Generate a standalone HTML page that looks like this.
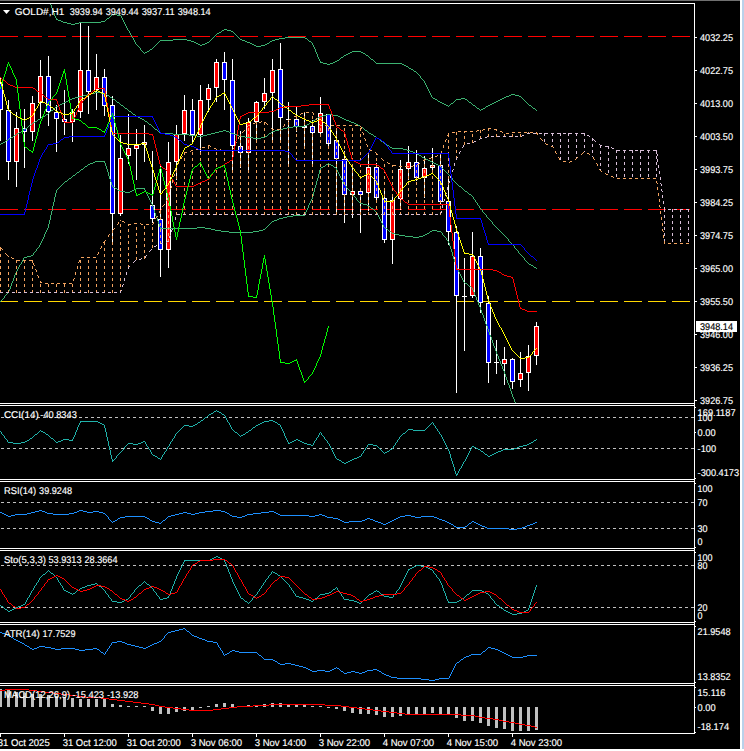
<!DOCTYPE html>
<html><head><meta charset="utf-8"><title>GOLD#,H1</title><style>html,body{margin:0;padding:0;background:#000;overflow:hidden}svg{display:block}</style></head><body>
<svg width="744" height="751" viewBox="0 0 744 751" font-family="&quot;Liberation Sans&quot;, sans-serif" shape-rendering="crispEdges">
<rect width="744" height="751" fill="#000"/>
<rect x="0" y="0" width="744" height="1" fill="#707070"/>
<rect x="740" y="0" width="2" height="751" fill="#ffffff"/>
<rect x="742" y="0" width="2" height="751" fill="#b9d1ea"/>
<rect x="0" y="749" width="744" height="2" fill="#ffffff"/>
<defs>
<clipPath id="cm"><rect x="0" y="4" width="694" height="399"/></clipPath>
<clipPath id="cw"><rect x="0" y="404" width="694" height="330"/></clipPath>
</defs>
<g clip-path="url(#cm)">
<line x1="0" y1="36.5" x2="693" y2="36.5" stroke="#ff0000" stroke-width="1" stroke-dasharray="18 6"/>
<line x1="0" y1="209.5" x2="693" y2="209.5" stroke="#ff0000" stroke-width="1" stroke-dasharray="18 6"/>
<line x1="0" y1="301.5" x2="693" y2="301.5" stroke="#ffd700" stroke-width="1" stroke-dasharray="18 6"/>
<rect x="0" y="78" width="1" height="63" fill="#fff"/>
<rect x="-2" y="83" width="5" height="27" fill="#fff"/>
<rect x="-1" y="84" width="3" height="25" fill="#0000ff"/>
<rect x="8" y="100" width="1" height="80" fill="#fff"/>
<rect x="6" y="110" width="5" height="52" fill="#fff"/>
<rect x="7" y="111" width="3" height="50" fill="#0000ff"/>
<rect x="16" y="112" width="1" height="75" fill="#fff"/>
<rect x="14" y="128" width="5" height="34" fill="#fff"/>
<rect x="15" y="129" width="3" height="32" fill="#ff0000"/>
<rect x="24" y="109" width="1" height="59" fill="#fff"/>
<rect x="22" y="128" width="5" height="4" fill="#fff"/>
<rect x="23" y="129" width="3" height="2" fill="#0000ff"/>
<rect x="32" y="96" width="1" height="45" fill="#fff"/>
<rect x="30" y="103" width="5" height="29" fill="#fff"/>
<rect x="31" y="104" width="3" height="27" fill="#ff0000"/>
<rect x="40" y="60" width="1" height="59" fill="#fff"/>
<rect x="38" y="76" width="5" height="27" fill="#fff"/>
<rect x="39" y="77" width="3" height="25" fill="#ff0000"/>
<rect x="48" y="56" width="1" height="70" fill="#fff"/>
<rect x="46" y="76" width="5" height="36" fill="#fff"/>
<rect x="47" y="77" width="3" height="34" fill="#0000ff"/>
<rect x="56" y="105" width="1" height="47" fill="#fff"/>
<rect x="54" y="112" width="5" height="7" fill="#fff"/>
<rect x="55" y="113" width="3" height="5" fill="#0000ff"/>
<rect x="64" y="90" width="1" height="45" fill="#fff"/>
<rect x="62" y="119" width="5" height="3" fill="#fff"/>
<rect x="63" y="120" width="3" height="1" fill="#0000ff"/>
<rect x="72" y="109" width="1" height="33" fill="#fff"/>
<rect x="70" y="112" width="5" height="10" fill="#fff"/>
<rect x="71" y="113" width="3" height="8" fill="#ff0000"/>
<rect x="80" y="23" width="1" height="95" fill="#fff"/>
<rect x="78" y="70" width="5" height="42" fill="#fff"/>
<rect x="79" y="71" width="3" height="40" fill="#ff0000"/>
<rect x="88" y="26" width="1" height="88" fill="#fff"/>
<rect x="86" y="70" width="5" height="22" fill="#fff"/>
<rect x="87" y="71" width="3" height="20" fill="#0000ff"/>
<rect x="96" y="54" width="1" height="56" fill="#fff"/>
<rect x="94" y="77" width="5" height="13" fill="#fff"/>
<rect x="95" y="78" width="3" height="11" fill="#ff0000"/>
<rect x="104" y="69" width="1" height="47" fill="#fff"/>
<rect x="102" y="77" width="5" height="29" fill="#fff"/>
<rect x="103" y="78" width="3" height="27" fill="#0000ff"/>
<rect x="112" y="96" width="1" height="146" fill="#fff"/>
<rect x="110" y="105" width="5" height="109" fill="#fff"/>
<rect x="111" y="106" width="3" height="107" fill="#0000ff"/>
<rect x="120" y="135" width="1" height="81" fill="#fff"/>
<rect x="118" y="158" width="5" height="56" fill="#fff"/>
<rect x="119" y="159" width="3" height="54" fill="#ff0000"/>
<rect x="128" y="114" width="1" height="50" fill="#fff"/>
<rect x="126" y="148" width="5" height="8" fill="#fff"/>
<rect x="127" y="149" width="3" height="6" fill="#ff0000"/>
<rect x="136" y="129" width="1" height="51" fill="#fff"/>
<rect x="134" y="145" width="5" height="4" fill="#fff"/>
<rect x="135" y="146" width="3" height="2" fill="#ff0000"/>
<rect x="144" y="125" width="1" height="37" fill="#fff"/>
<rect x="142" y="142" width="5" height="3" fill="#fff"/>
<rect x="143" y="143" width="3" height="1" fill="#ff0000"/>
<rect x="152" y="151" width="1" height="72" fill="#fff"/>
<rect x="150" y="205" width="5" height="14" fill="#fff"/>
<rect x="151" y="206" width="3" height="12" fill="#0000ff"/>
<rect x="160" y="166" width="1" height="111" fill="#fff"/>
<rect x="158" y="219" width="5" height="31" fill="#fff"/>
<rect x="159" y="220" width="3" height="29" fill="#0000ff"/>
<rect x="168" y="142" width="1" height="126" fill="#fff"/>
<rect x="166" y="162" width="5" height="88" fill="#fff"/>
<rect x="167" y="163" width="3" height="86" fill="#ff0000"/>
<rect x="176" y="125" width="1" height="55" fill="#fff"/>
<rect x="174" y="134" width="5" height="28" fill="#fff"/>
<rect x="175" y="135" width="3" height="26" fill="#ff0000"/>
<rect x="184" y="95" width="1" height="46" fill="#fff"/>
<rect x="182" y="110" width="5" height="24" fill="#fff"/>
<rect x="183" y="111" width="3" height="22" fill="#ff0000"/>
<rect x="192" y="99" width="1" height="44" fill="#fff"/>
<rect x="190" y="110" width="5" height="25" fill="#fff"/>
<rect x="191" y="111" width="3" height="23" fill="#0000ff"/>
<rect x="200" y="85" width="1" height="69" fill="#fff"/>
<rect x="198" y="100" width="5" height="35" fill="#fff"/>
<rect x="199" y="101" width="3" height="33" fill="#ff0000"/>
<rect x="208" y="84" width="1" height="28" fill="#fff"/>
<rect x="206" y="88" width="5" height="12" fill="#fff"/>
<rect x="207" y="89" width="3" height="10" fill="#ff0000"/>
<rect x="216" y="59" width="1" height="43" fill="#fff"/>
<rect x="214" y="62" width="5" height="26" fill="#fff"/>
<rect x="215" y="63" width="3" height="24" fill="#ff0000"/>
<rect x="224" y="52" width="1" height="58" fill="#fff"/>
<rect x="222" y="62" width="5" height="18" fill="#fff"/>
<rect x="223" y="63" width="3" height="16" fill="#0000ff"/>
<rect x="232" y="59" width="1" height="114" fill="#fff"/>
<rect x="230" y="80" width="5" height="66" fill="#fff"/>
<rect x="231" y="81" width="3" height="64" fill="#0000ff"/>
<rect x="240" y="131" width="1" height="37" fill="#fff"/>
<rect x="238" y="146" width="5" height="7" fill="#fff"/>
<rect x="239" y="147" width="3" height="5" fill="#0000ff"/>
<rect x="248" y="118" width="1" height="52" fill="#fff"/>
<rect x="246" y="122" width="5" height="31" fill="#fff"/>
<rect x="247" y="123" width="3" height="29" fill="#ff0000"/>
<rect x="256" y="101" width="1" height="42" fill="#fff"/>
<rect x="254" y="102" width="5" height="20" fill="#fff"/>
<rect x="255" y="103" width="3" height="18" fill="#ff0000"/>
<rect x="264" y="78" width="1" height="31" fill="#fff"/>
<rect x="262" y="93" width="5" height="9" fill="#fff"/>
<rect x="263" y="94" width="3" height="7" fill="#ff0000"/>
<rect x="272" y="59" width="1" height="84" fill="#fff"/>
<rect x="270" y="70" width="5" height="23" fill="#fff"/>
<rect x="271" y="71" width="3" height="21" fill="#ff0000"/>
<rect x="280" y="43" width="1" height="99" fill="#fff"/>
<rect x="278" y="69" width="5" height="49" fill="#fff"/>
<rect x="279" y="70" width="3" height="47" fill="#0000ff"/>
<rect x="288" y="102" width="1" height="62" fill="#fff"/>
<rect x="286" y="119" width="5" height="1" fill="#fff" />
<rect x="296" y="107" width="1" height="25" fill="#fff"/>
<rect x="294" y="119" width="5" height="8" fill="#fff"/>
<rect x="295" y="120" width="3" height="6" fill="#0000ff"/>
<rect x="304" y="113" width="1" height="35" fill="#fff"/>
<rect x="302" y="126" width="5" height="2" fill="#fff"/>
<rect x="312" y="120" width="1" height="44" fill="#fff"/>
<rect x="310" y="126" width="5" height="7" fill="#fff"/>
<rect x="311" y="127" width="3" height="5" fill="#0000ff"/>
<rect x="320" y="97" width="1" height="37" fill="#fff"/>
<rect x="318" y="113" width="5" height="20" fill="#fff"/>
<rect x="319" y="114" width="3" height="18" fill="#ff0000"/>
<rect x="328" y="114" width="1" height="35" fill="#fff"/>
<rect x="326" y="114" width="5" height="30" fill="#fff"/>
<rect x="327" y="115" width="3" height="28" fill="#0000ff"/>
<rect x="336" y="128" width="1" height="84" fill="#fff"/>
<rect x="334" y="140" width="5" height="19" fill="#fff"/>
<rect x="335" y="141" width="3" height="17" fill="#0000ff"/>
<rect x="344" y="151" width="1" height="72" fill="#fff"/>
<rect x="342" y="159" width="5" height="36" fill="#fff"/>
<rect x="343" y="160" width="3" height="34" fill="#0000ff"/>
<rect x="352" y="168" width="1" height="50" fill="#fff"/>
<rect x="350" y="191" width="5" height="4" fill="#fff"/>
<rect x="351" y="192" width="3" height="2" fill="#ff0000"/>
<rect x="360" y="191" width="1" height="42" fill="#fff"/>
<rect x="358" y="191" width="5" height="4" fill="#fff"/>
<rect x="359" y="192" width="3" height="2" fill="#0000ff"/>
<rect x="368" y="152" width="1" height="59" fill="#fff"/>
<rect x="366" y="167" width="5" height="26" fill="#fff"/>
<rect x="367" y="168" width="3" height="24" fill="#ff0000"/>
<rect x="376" y="163" width="1" height="40" fill="#fff"/>
<rect x="374" y="167" width="5" height="31" fill="#fff"/>
<rect x="375" y="168" width="3" height="29" fill="#0000ff"/>
<rect x="384" y="190" width="1" height="53" fill="#fff"/>
<rect x="382" y="198" width="5" height="42" fill="#fff"/>
<rect x="383" y="199" width="3" height="40" fill="#0000ff"/>
<rect x="392" y="195" width="1" height="69" fill="#fff"/>
<rect x="390" y="200" width="5" height="40" fill="#fff"/>
<rect x="391" y="201" width="3" height="38" fill="#ff0000"/>
<rect x="400" y="160" width="1" height="50" fill="#fff"/>
<rect x="398" y="169" width="5" height="30" fill="#fff"/>
<rect x="399" y="170" width="3" height="28" fill="#ff0000"/>
<rect x="408" y="146" width="1" height="34" fill="#fff"/>
<rect x="406" y="162" width="5" height="7" fill="#fff"/>
<rect x="407" y="163" width="3" height="5" fill="#ff0000"/>
<rect x="416" y="150" width="1" height="31" fill="#fff"/>
<rect x="414" y="162" width="5" height="16" fill="#fff"/>
<rect x="415" y="163" width="3" height="14" fill="#0000ff"/>
<rect x="424" y="156" width="1" height="42" fill="#fff"/>
<rect x="422" y="168" width="5" height="10" fill="#fff"/>
<rect x="423" y="169" width="3" height="8" fill="#ff0000"/>
<rect x="432" y="148" width="1" height="24" fill="#fff"/>
<rect x="430" y="165" width="5" height="3" fill="#fff"/>
<rect x="431" y="166" width="3" height="1" fill="#ff0000"/>
<rect x="440" y="154" width="1" height="51" fill="#fff"/>
<rect x="438" y="165" width="5" height="37" fill="#fff"/>
<rect x="439" y="166" width="3" height="35" fill="#0000ff"/>
<rect x="448" y="178" width="1" height="67" fill="#fff"/>
<rect x="446" y="201" width="5" height="31" fill="#fff"/>
<rect x="447" y="202" width="3" height="29" fill="#0000ff"/>
<rect x="456" y="226" width="1" height="167" fill="#fff"/>
<rect x="454" y="232" width="5" height="64" fill="#fff"/>
<rect x="455" y="233" width="3" height="62" fill="#0000ff"/>
<rect x="464" y="258" width="1" height="93" fill="#fff"/>
<rect x="462" y="296" width="5" height="1" fill="#fff" />
<rect x="472" y="232" width="1" height="66" fill="#fff"/>
<rect x="470" y="256" width="5" height="40" fill="#fff"/>
<rect x="471" y="257" width="3" height="38" fill="#ff0000"/>
<rect x="480" y="248" width="1" height="65" fill="#fff"/>
<rect x="478" y="256" width="5" height="47" fill="#fff"/>
<rect x="479" y="257" width="3" height="45" fill="#0000ff"/>
<rect x="488" y="296" width="1" height="87" fill="#fff"/>
<rect x="486" y="303" width="5" height="60" fill="#fff"/>
<rect x="487" y="304" width="3" height="58" fill="#0000ff"/>
<rect x="496" y="340" width="1" height="34" fill="#fff"/>
<rect x="494" y="362" width="5" height="1" fill="#fff" />
<rect x="504" y="347" width="1" height="38" fill="#fff"/>
<rect x="502" y="359" width="5" height="5" fill="#fff"/>
<rect x="503" y="360" width="3" height="3" fill="#ff0000"/>
<rect x="512" y="358" width="1" height="31" fill="#fff"/>
<rect x="510" y="359" width="5" height="23" fill="#fff"/>
<rect x="511" y="360" width="3" height="21" fill="#0000ff"/>
<rect x="520" y="352" width="1" height="35" fill="#fff"/>
<rect x="518" y="373" width="5" height="7" fill="#fff"/>
<rect x="519" y="374" width="3" height="5" fill="#ff0000"/>
<rect x="528" y="345" width="1" height="46" fill="#fff"/>
<rect x="526" y="356" width="5" height="17" fill="#fff"/>
<rect x="527" y="357" width="3" height="15" fill="#ff0000"/>
<rect x="536" y="322" width="1" height="43" fill="#fff"/>
<rect x="534" y="326" width="5" height="30" fill="#fff"/>
<rect x="535" y="327" width="3" height="28" fill="#ff0000"/>
<path d="M50.5 2v3M51.5 5v3M53.5 10v3M54.5 13v3M315.5 49v3M317.5 54v3M48 -2.5h1M48 -1.5h1M49 0.5h1M49 1.5h1M52 8.5h1M52 9.5h1M112 14.5h5M111 15.5h1M117 15.5h4M55 16.5h1M110 16.5h1M121 16.5h1M55 17.5h1M109 17.5h1M121 17.5h1M56 18.5h1M107 18.5h2M122 18.5h1M56 19.5h2M106 19.5h1M122 19.5h1M58 20.5h3M105 20.5h1M123 20.5h1M61 21.5h2M101 21.5h4M123 21.5h1M63 22.5h4M79 22.5h22M124 22.5h1M67 23.5h4M75 23.5h4M124 23.5h1M71 24.5h4M125 24.5h1M125 25.5h1M126 26.5h1M126 27.5h1M127 28.5h1M127 29.5h1M224 29.5h3M128 30.5h1M222 30.5h2M227 30.5h4M129 31.5h1M221 31.5h1M231 31.5h2M129 32.5h1M219 32.5h2M233 32.5h1M130 33.5h1M217 33.5h2M234 33.5h1M130 34.5h1M216 34.5h1M235 34.5h1M131 35.5h1M215 35.5h1M236 35.5h1M131 36.5h1M214 36.5h1M237 36.5h1M132 37.5h1M213 37.5h1M238 37.5h1M285 37.5h20M133 38.5h1M212 38.5h1M239 38.5h1M279 38.5h6M305 38.5h2M133 39.5h1M173 39.5h14M211 39.5h1M240 39.5h2M275 39.5h4M307 39.5h1M134 40.5h1M160 40.5h13M187 40.5h4M210 40.5h1M242 40.5h3M272 40.5h3M308 40.5h1M134 41.5h1M159 41.5h1M191 41.5h3M209 41.5h1M245 41.5h2M270 41.5h2M309 41.5h2M135 42.5h1M158 42.5h1M194 42.5h2M207 42.5h2M247 42.5h3M269 42.5h1M311 42.5h1M135 43.5h1M157 43.5h1M196 43.5h2M205 43.5h2M250 43.5h2M267 43.5h2M312 43.5h1M136 44.5h1M156 44.5h1M198 44.5h2M202 44.5h3M252 44.5h2M265 44.5h2M312 44.5h1M137 45.5h1M155 45.5h1M200 45.5h2M254 45.5h2M261 45.5h4M313 45.5h1M138 46.5h1M154 46.5h1M256 46.5h5M313 46.5h1M139 47.5h1M153 47.5h1M314 47.5h1M140 48.5h1M152 48.5h1M314 48.5h1M140 49.5h1M150 49.5h2M141 50.5h1M149 50.5h1M142 51.5h1M147 51.5h2M352 51.5h9M143 52.5h1M145 52.5h2M316 52.5h1M350 52.5h2M361 52.5h2M144 53.5h1M316 53.5h1M348 53.5h2M363 53.5h2M346 54.5h2M365 54.5h1M344 55.5h2M366 55.5h2M343 56.5h1M368 56.5h1M318 57.5h1M341 57.5h2M369 57.5h1M318 58.5h1M340 58.5h1M370 58.5h1M319 59.5h1M339 59.5h1M371 59.5h2M319 60.5h1M337 60.5h2M373 60.5h1M320 61.5h1M335 61.5h2M374 61.5h1M320 62.5h3M333 62.5h2M375 62.5h1M323 63.5h4M330 63.5h3M376 63.5h26M327 64.5h3M402 64.5h2M404 65.5h2M406 66.5h2M408 67.5h1M409 68.5h2M411 69.5h2M413 70.5h1M414 71.5h2M416 72.5h1M417 73.5h1M418 74.5h1M419 75.5h1M420 76.5h1M420 77.5h1M421 78.5h1M422 79.5h1M423 80.5h1M424 81.5h1M424 82.5h1M425 83.5h1M425 84.5h1M426 85.5h1M426 86.5h1M427 87.5h1M427 88.5h1M428 89.5h1M428 90.5h1M429 91.5h1M429 92.5h1M430 93.5h1M430 94.5h1M511 94.5h4M431 95.5h1M509 95.5h2M515 95.5h4M431 96.5h1M506 96.5h3M519 96.5h2M432 97.5h1M504 97.5h2M521 97.5h1M433 98.5h2M461 98.5h4M502 98.5h2M522 98.5h1M435 99.5h2M456 99.5h5M465 99.5h2M500 99.5h2M523 99.5h1M437 100.5h1M455 100.5h1M467 100.5h1M498 100.5h2M524 100.5h1M438 101.5h2M454 101.5h1M468 101.5h1M496 101.5h2M525 101.5h1M440 102.5h2M453 102.5h1M469 102.5h2M494 102.5h2M526 102.5h1M442 103.5h2M451 103.5h2M471 103.5h1M492 103.5h2M527 103.5h1M444 104.5h2M450 104.5h1M472 104.5h1M490 104.5h2M528 104.5h1M446 105.5h2M449 105.5h1M473 105.5h2M488 105.5h2M529 105.5h2M448 106.5h1M475 106.5h1M486 106.5h2M531 106.5h1M476 107.5h1M485 107.5h1M532 107.5h1M477 108.5h2M483 108.5h2M533 108.5h2M479 109.5h1M481 109.5h2M535 109.5h1M480 110.5h1M536 110.5h1" fill="none" stroke="#3cb371" stroke-width="1"/>
<path d="M95 92.5h6M91 93.5h4M101 93.5h4M87 94.5h4M105 94.5h2M83 95.5h4M107 95.5h2M79 96.5h4M109 96.5h1M75 97.5h4M110 97.5h2M72 98.5h3M112 98.5h1M70 99.5h2M113 99.5h2M68 100.5h2M115 100.5h1M66 101.5h2M116 101.5h1M64 102.5h2M117 102.5h2M62 103.5h2M119 103.5h1M60 104.5h2M120 104.5h1M58 105.5h2M121 105.5h2M56 106.5h2M123 106.5h1M55 107.5h1M124 107.5h1M54 108.5h1M125 108.5h2M53 109.5h1M127 109.5h1M51 110.5h2M128 110.5h1M50 111.5h1M129 111.5h2M49 112.5h1M131 112.5h1M48 113.5h1M132 113.5h1M46 114.5h2M133 114.5h2M327 114.5h6M45 115.5h1M135 115.5h1M323 115.5h4M333 115.5h5M43 116.5h2M136 116.5h2M320 116.5h3M338 116.5h2M41 117.5h2M138 117.5h2M318 117.5h2M340 117.5h2M40 118.5h1M140 118.5h2M317 118.5h1M342 118.5h2M38 119.5h2M142 119.5h2M315 119.5h2M344 119.5h2M37 120.5h1M144 120.5h1M313 120.5h2M346 120.5h3M35 121.5h2M145 121.5h2M312 121.5h1M349 121.5h2M33 122.5h2M147 122.5h1M310 122.5h2M351 122.5h3M32 123.5h1M148 123.5h1M309 123.5h1M354 123.5h2M31 124.5h1M149 124.5h2M307 124.5h2M356 124.5h2M29 125.5h2M151 125.5h1M305 125.5h2M358 125.5h2M28 126.5h1M152 126.5h1M293 126.5h12M360 126.5h1M27 127.5h1M153 127.5h1M287 127.5h6M361 127.5h2M25 128.5h2M154 128.5h1M283 128.5h4M363 128.5h1M24 129.5h1M155 129.5h2M279 129.5h4M364 129.5h1M22 130.5h2M157 130.5h1M223 130.5h3M275 130.5h4M365 130.5h2M21 131.5h1M158 131.5h1M219 131.5h4M226 131.5h3M272 131.5h3M367 131.5h1M19 132.5h2M159 132.5h1M215 132.5h4M229 132.5h2M271 132.5h1M368 132.5h1M17 133.5h2M160 133.5h13M211 133.5h4M231 133.5h3M269 133.5h2M369 133.5h2M16 134.5h1M173 134.5h16M207 134.5h4M234 134.5h3M268 134.5h1M371 134.5h2M14 135.5h2M189 135.5h8M203 135.5h4M237 135.5h2M267 135.5h1M373 135.5h1M13 136.5h1M197 136.5h6M239 136.5h6M265 136.5h2M374 136.5h2M11 137.5h2M245 137.5h8M261 137.5h4M376 137.5h1M9 138.5h2M253 138.5h8M377 138.5h2M8 139.5h1M379 139.5h1M6 140.5h2M380 140.5h1M5 141.5h1M381 141.5h2M3 142.5h2M383 142.5h1M1 143.5h2M384 143.5h1M0 144.5h1M385 144.5h2M-2 145.5h2M387 145.5h2M389 146.5h1M390 147.5h2M392 148.5h11M403 149.5h4M407 150.5h3M410 151.5h3M413 152.5h2M415 153.5h2M417 154.5h2M419 155.5h2M421 156.5h1M422 157.5h2M424 158.5h2M426 159.5h2M428 160.5h2M430 161.5h2M432 162.5h2M434 163.5h2M436 164.5h2M438 165.5h2M440 166.5h1M441 167.5h1M442 168.5h1M443 169.5h1M444 170.5h1M445 171.5h1M446 172.5h1M447 173.5h1M448 174.5h1M449 175.5h1M450 176.5h1M451 177.5h1M452 178.5h1M452 179.5h1M453 180.5h1M454 181.5h1M455 182.5h1M456 183.5h1M457 184.5h1M458 185.5h1M459 186.5h2M461 187.5h1M462 188.5h1M463 189.5h1M464 190.5h1M465 191.5h2M467 192.5h1M468 193.5h1M469 194.5h2M471 195.5h1M472 196.5h1M473 197.5h1M473 198.5h1M474 199.5h1M475 200.5h1M475 201.5h1M476 202.5h1M477 203.5h1M477 204.5h1M478 205.5h1M479 206.5h1M479 207.5h1M480 208.5h1M481 209.5h1M482 210.5h1M482 211.5h1M483 212.5h1M484 213.5h1M485 214.5h1M486 215.5h1M486 216.5h1M487 217.5h1M488 218.5h1M489 219.5h1M490 220.5h1M491 221.5h1M492 222.5h1M492 223.5h1M493 224.5h1M494 225.5h1M495 226.5h1M496 227.5h1M497 228.5h1M498 229.5h1M499 230.5h1M500 231.5h1M501 232.5h1M502 233.5h1M503 234.5h1M504 235.5h1M505 236.5h1M506 237.5h1M507 238.5h1M508 239.5h1M508 240.5h1M509 241.5h1M510 242.5h1M511 243.5h1M512 244.5h1M513 245.5h1M514 246.5h1M514 247.5h1M515 248.5h1M516 249.5h1M517 250.5h1M518 251.5h1M518 252.5h1M519 253.5h1M520 254.5h1M521 255.5h1M522 256.5h1M523 257.5h1M524 258.5h1M524 259.5h1M525 260.5h1M526 261.5h1M527 262.5h1M528 263.5h1M529 264.5h2M531 265.5h2M533 266.5h1M534 267.5h2M536 268.5h1" fill="none" stroke="#3cb371" stroke-width="1"/>
<path d="M10.5 286v3M11.5 283v3M13.5 278v3M14.5 275v3M44.5 234v3M48.5 224v4M49.5 220v4M50.5 215v5M51.5 211v4M52.5 206v5M53.5 202v4M54.5 197v5M55.5 193v4M56.5 190v3M105.5 163v3M106.5 166v3M107.5 169v3M108.5 172v4M109.5 176v3M110.5 179v3M111.5 182v3M152.5 204v3M153.5 207v3M154.5 210v3M155.5 213v3M157.5 218v3M158.5 221v3M159.5 224v3M308.5 205v3M312.5 196v3M313.5 192v4M314.5 188v4M315.5 185v3M316.5 181v4M317.5 178v3M318.5 174v4M319.5 170v4M449.5 243v3M450.5 246v3M451.5 249v3M452.5 252v4M453.5 256v3M454.5 259v3M455.5 262v3M456.5 265v3M474.5 292v3M476.5 297v3M478.5 302v3M480.5 307v3M481.5 310v3M483.5 315v3M484.5 318v3M485.5 321v3M487.5 326v3M488.5 329v3M489.5 332v3M491.5 337v3M492.5 340v3M493.5 343v3M495.5 348v3M496.5 351v3M498.5 356v3M500.5 361v3M502.5 366v3M504.5 371v3M505.5 374v3M506.5 377v3M507.5 380v3M509.5 385v3M510.5 388v3M511.5 391v3M512.5 394v3M514.5 399v3M516.5 404v3M518.5 409v3M95 161.5h10M93 162.5h2M104 162.5h1M90 163.5h3M328 163.5h1M88 164.5h2M326 164.5h2M329 164.5h2M87 165.5h1M325 165.5h1M331 165.5h2M85 166.5h2M323 166.5h2M333 166.5h1M84 167.5h1M321 167.5h2M334 167.5h2M83 168.5h1M320 168.5h1M336 168.5h1M81 169.5h2M320 169.5h1M336 169.5h1M80 170.5h1M337 170.5h1M79 171.5h1M337 171.5h1M77 172.5h2M338 172.5h1M76 173.5h1M338 173.5h1M75 174.5h1M339 174.5h1M73 175.5h2M339 175.5h1M72 176.5h1M340 176.5h1M71 177.5h1M340 177.5h1M69 178.5h2M341 178.5h1M68 179.5h1M341 179.5h1M67 180.5h1M342 180.5h1M65 181.5h2M342 181.5h1M64 182.5h1M343 182.5h1M63 183.5h1M343 183.5h1M62 184.5h1M344 184.5h1M61 185.5h1M112 185.5h1M345 185.5h1M60 186.5h1M112 186.5h1M346 186.5h1M59 187.5h1M113 187.5h2M346 187.5h1M58 188.5h1M115 188.5h2M136 188.5h9M347 188.5h1M57 189.5h1M117 189.5h1M134 189.5h2M144 189.5h1M348 189.5h1M118 190.5h2M132 190.5h2M145 190.5h1M349 190.5h1M120 191.5h5M130 191.5h2M145 191.5h1M350 191.5h1M125 192.5h5M146 192.5h1M350 192.5h1M146 193.5h1M351 193.5h1M147 194.5h1M352 194.5h1M147 195.5h1M353 195.5h1M148 196.5h1M354 196.5h1M148 197.5h1M355 197.5h1M149 198.5h1M356 198.5h1M149 199.5h1M311 199.5h1M356 199.5h1M150 200.5h1M311 200.5h1M357 200.5h1M150 201.5h1M310 201.5h1M358 201.5h1M151 202.5h1M310 202.5h1M359 202.5h1M151 203.5h1M309 203.5h1M360 203.5h3M309 204.5h1M363 204.5h4M367 205.5h2M369 206.5h1M370 207.5h1M307 208.5h1M371 208.5h2M307 209.5h1M373 209.5h1M306 210.5h1M374 210.5h1M306 211.5h1M375 211.5h1M305 212.5h1M376 212.5h1M305 213.5h1M377 213.5h1M304 214.5h1M377 214.5h1M293 215.5h12M378 215.5h1M156 216.5h1M287 216.5h6M378 216.5h1M156 217.5h1M283 217.5h4M379 217.5h1M279 218.5h4M379 218.5h1M277 219.5h2M380 219.5h1M274 220.5h3M380 220.5h1M272 221.5h2M381 221.5h1M271 222.5h1M381 222.5h1M270 223.5h1M382 223.5h1M269 224.5h1M382 224.5h1M268 225.5h1M383 225.5h1M267 226.5h1M383 226.5h1M160 227.5h1M197 227.5h8M266 227.5h1M384 227.5h1M47 228.5h1M160 228.5h37M205 228.5h6M265 228.5h1M385 228.5h2M47 229.5h1M211 229.5h4M263 229.5h2M387 229.5h1M46 230.5h1M215 230.5h6M259 230.5h4M388 230.5h1M432 230.5h5M46 231.5h1M221 231.5h8M253 231.5h6M389 231.5h2M430 231.5h2M437 231.5h4M45 232.5h1M229 232.5h24M391 232.5h1M429 232.5h1M441 232.5h1M45 233.5h1M392 233.5h3M427 233.5h2M442 233.5h1M395 234.5h4M425 234.5h2M442 234.5h1M399 235.5h6M423 235.5h2M443 235.5h1M405 236.5h8M419 236.5h4M444 236.5h1M43 237.5h1M413 237.5h6M445 237.5h1M43 238.5h1M446 238.5h1M42 239.5h1M446 239.5h1M42 240.5h1M447 240.5h1M41 241.5h1M448 241.5h1M41 242.5h1M448 242.5h1M40 243.5h1M40 244.5h1M39 245.5h1M39 246.5h1M38 247.5h1M37 248.5h1M36 249.5h1M36 250.5h1M35 251.5h1M34 252.5h1M33 253.5h1M33 254.5h1M31 255.5h2M27 256.5h4M24 257.5h3M23 258.5h1M23 259.5h1M22 260.5h1M22 261.5h1M21 262.5h1M21 263.5h1M20 264.5h1M19 265.5h1M19 266.5h1M18 267.5h1M18 268.5h1M457 268.5h1M17 269.5h1M457 269.5h1M17 270.5h1M458 270.5h1M16 271.5h1M458 271.5h1M16 272.5h1M459 272.5h1M15 273.5h1M459 273.5h1M15 274.5h1M460 274.5h1M460 275.5h1M461 276.5h1M461 277.5h1M462 278.5h1M462 279.5h1M463 280.5h1M12 281.5h1M463 281.5h1M12 282.5h1M464 282.5h1M465 283.5h2M467 284.5h1M468 285.5h1M469 286.5h2M471 287.5h1M472 288.5h1M9 289.5h1M472 289.5h1M9 290.5h1M473 290.5h1M8 291.5h1M473 291.5h1M8 292.5h1M7 293.5h1M6 294.5h1M5 295.5h1M475 295.5h1M4 296.5h1M475 296.5h1M4 297.5h1M3 298.5h1M2 299.5h1M1 300.5h1M477 300.5h1M0 301.5h1M477 301.5h1M-1 302.5h1M-2 303.5h1M479 305.5h1M479 306.5h1M482 313.5h1M482 314.5h1M486 324.5h1M486 325.5h1M490 335.5h1M490 336.5h1M494 346.5h1M494 347.5h1M497 354.5h1M497 355.5h1M499 359.5h1M499 360.5h1M501 364.5h1M501 365.5h1M503 369.5h1M503 370.5h1M508 383.5h1M508 384.5h1M513 397.5h1M513 398.5h1M515 402.5h1M515 403.5h1M517 407.5h1M517 408.5h1M519 412.5h1M519 413.5h1M520 414.5h1M520 415.5h1" fill="none" stroke="#3cb371" stroke-width="1"/>
<path d="M0.5 248v3M0.5 254v3M0.5 260v3M0.5 266v3M0.5 272v3M0.5 278v3M0.5 284v3M0.5 290v3M8.5 260v3M8.5 266v3M8.5 272v3M8.5 278v3M8.5 284v3M8.5 290v3M16.5 260v3M16.5 266v3M16.5 272v3M16.5 278v3M16.5 284v3M16.5 290v3M24.5 260v3M24.5 266v3M24.5 272v3M24.5 278v3M24.5 284v3M24.5 290v3M32.5 260v3M32.5 266v3M32.5 272v3M32.5 278v3M32.5 284v3M32.5 290v3M40.5 284v3M40.5 290v3M48.5 284v3M48.5 290v3M56.5 284v3M56.5 290v3M64.5 284v3M64.5 290v3M72.5 284v3M72.5 290v3M80.5 260v3M80.5 266v3M80.5 272v3M80.5 278v3M80.5 284v3M80.5 290v3M88.5 260v3M88.5 266v3M88.5 272v3M88.5 278v3M88.5 284v3M88.5 290v3M96.5 260v3M96.5 266v3M96.5 272v3M96.5 278v3M96.5 284v3M96.5 290v3M104.5 242v3M104.5 248v3M104.5 254v3M104.5 260v3M104.5 266v3M104.5 272v3M104.5 278v3M104.5 284v3M104.5 290v3M112.5 230v3M112.5 236v3M112.5 242v3M112.5 248v3M112.5 254v3M112.5 260v3M112.5 266v3M112.5 272v3M112.5 278v3M112.5 284v3M112.5 290v3M120.5 224v3M120.5 230v3M120.5 236v3M120.5 242v3M120.5 248v3M120.5 254v3M120.5 260v3M120.5 266v3M120.5 272v3M120.5 278v3M120.5 284v3M120.5 290v3M128.5 229v3M128.5 235v3M128.5 241v3M128.5 247v3M128.5 253v3M128.5 259v3M128.5 265v3M136.5 227v3M136.5 233v3M136.5 239v3M136.5 245v3M136.5 251v3M136.5 257v3M144.5 226v3M144.5 232v3M144.5 238v3M144.5 244v3M144.5 250v3M144.5 256v3M152.5 227v3M152.5 233v3M152.5 239v3M152.5 245v3M160.5 211v3M160.5 217v3M160.5 223v3M160.5 229v3M160.5 235v3M160.5 241v3M168.5 197v3M168.5 203v3M168.5 209v3M168.5 215v3M168.5 221v3M168.5 227v3M168.5 233v3M168.5 239v3M176.5 170v3M176.5 176v3M176.5 182v3M176.5 188v3M176.5 194v3M176.5 200v3M176.5 206v3M176.5 212v3M184.5 152v3M184.5 158v3M184.5 164v3M184.5 170v3M184.5 176v3M184.5 182v3M184.5 188v3M184.5 194v3M184.5 200v3M184.5 206v3M184.5 212v3M192.5 152v3M192.5 158v3M192.5 164v3M192.5 170v3M192.5 176v3M192.5 182v3M192.5 188v3M192.5 194v3M192.5 200v3M192.5 206v3M192.5 212v3M200.5 152v3M200.5 158v3M200.5 164v3M200.5 170v3M200.5 176v3M200.5 182v3M200.5 188v3M200.5 194v3M200.5 200v3M200.5 206v3M200.5 212v3M208.5 146v3M208.5 152v3M208.5 158v3M208.5 164v3M208.5 170v3M208.5 176v3M208.5 182v3M208.5 188v3M208.5 194v3M208.5 200v3M208.5 206v3M208.5 212v3M216.5 152v3M216.5 158v3M216.5 164v3M216.5 170v3M216.5 176v3M216.5 182v3M216.5 188v3M216.5 194v3M216.5 200v3M216.5 206v3M216.5 212v3M224.5 152v3M224.5 158v3M224.5 164v3M224.5 170v3M224.5 176v3M224.5 182v3M224.5 188v3M224.5 194v3M224.5 200v3M224.5 206v3M224.5 212v3M232.5 152v3M232.5 158v3M232.5 164v3M232.5 170v3M232.5 176v3M232.5 182v3M232.5 188v3M232.5 194v3M232.5 200v3M232.5 206v3M232.5 212v3M240.5 134v3M240.5 140v3M240.5 146v3M240.5 152v3M240.5 158v3M240.5 164v3M240.5 170v3M240.5 176v3M240.5 182v3M240.5 188v3M240.5 194v3M240.5 200v3M240.5 206v3M240.5 212v3M248.5 128v3M248.5 134v3M248.5 140v3M248.5 146v3M248.5 152v3M248.5 158v3M248.5 164v3M248.5 170v3M248.5 176v3M248.5 182v3M248.5 188v3M248.5 194v3M248.5 200v3M248.5 206v3M248.5 212v3M256.5 122v3M256.5 128v3M256.5 134v3M256.5 140v3M256.5 146v3M256.5 152v3M256.5 158v3M256.5 164v3M256.5 170v3M256.5 176v3M256.5 182v3M256.5 188v3M256.5 194v3M256.5 200v3M256.5 206v3M256.5 212v3M264.5 122v3M264.5 128v3M264.5 134v3M264.5 140v3M264.5 146v3M264.5 152v3M264.5 158v3M264.5 164v3M264.5 170v3M264.5 176v3M264.5 182v3M264.5 188v3M264.5 194v3M264.5 200v3M264.5 206v3M264.5 212v3M272.5 134v3M272.5 140v3M272.5 146v3M272.5 152v3M272.5 158v3M272.5 164v3M272.5 170v3M272.5 176v3M272.5 182v3M272.5 188v3M272.5 194v3M272.5 200v3M272.5 206v3M272.5 212v3M280.5 134v3M280.5 140v3M280.5 146v3M280.5 152v3M280.5 158v3M280.5 164v3M280.5 170v3M280.5 176v3M280.5 182v3M280.5 188v3M280.5 194v3M280.5 200v3M280.5 206v3M280.5 212v3M288.5 122v3M288.5 128v3M288.5 134v3M288.5 140v3M288.5 146v3M288.5 152v3M288.5 158v3M288.5 164v3M288.5 170v3M288.5 176v3M288.5 182v3M288.5 188v3M288.5 194v3M288.5 200v3M288.5 206v3M288.5 212v3M296.5 116v3M296.5 122v3M296.5 128v3M296.5 134v3M296.5 140v3M296.5 146v3M296.5 152v3M296.5 158v3M296.5 164v3M296.5 170v3M296.5 176v3M296.5 182v3M296.5 188v3M296.5 194v3M296.5 200v3M296.5 206v3M296.5 212v3M304.5 116v3M304.5 122v3M304.5 128v3M304.5 134v3M304.5 140v3M304.5 146v3M304.5 152v3M304.5 158v3M304.5 164v3M304.5 170v3M304.5 176v3M304.5 182v3M304.5 188v3M304.5 194v3M304.5 200v3M304.5 206v3M304.5 212v3M312.5 116v3M312.5 122v3M312.5 128v3M312.5 134v3M312.5 140v3M312.5 146v3M312.5 152v3M312.5 158v3M312.5 164v3M312.5 170v3M312.5 176v3M312.5 182v3M312.5 188v3M312.5 194v3M312.5 200v3M312.5 206v3M312.5 212v3M320.5 128v3M320.5 134v3M320.5 140v3M320.5 146v3M320.5 152v3M320.5 158v3M320.5 164v3M320.5 170v3M320.5 176v3M320.5 182v3M320.5 188v3M320.5 194v3M320.5 200v3M320.5 206v3M320.5 212v3M328.5 128v3M328.5 134v3M328.5 140v3M328.5 146v3M328.5 152v3M328.5 158v3M328.5 164v3M328.5 170v3M328.5 176v3M328.5 182v3M328.5 188v3M328.5 194v3M328.5 200v3M328.5 206v3M328.5 212v3M336.5 128v3M336.5 134v3M336.5 140v3M336.5 146v3M336.5 152v3M336.5 158v3M336.5 164v3M336.5 170v3M336.5 176v3M336.5 182v3M336.5 188v3M336.5 194v3M336.5 200v3M336.5 206v3M336.5 212v3M344.5 128v3M344.5 134v3M344.5 140v3M344.5 146v3M344.5 152v3M344.5 158v3M344.5 164v3M344.5 170v3M344.5 176v3M344.5 182v3M344.5 188v3M344.5 194v3M344.5 200v3M344.5 206v3M344.5 212v3M352.5 128v3M352.5 134v3M352.5 140v3M352.5 146v3M352.5 152v3M352.5 158v3M352.5 164v3M352.5 170v3M352.5 176v3M352.5 182v3M352.5 188v3M352.5 194v3M352.5 200v3M352.5 206v3M352.5 212v3M360.5 128v3M360.5 134v3M360.5 140v3M360.5 146v3M360.5 152v3M360.5 158v3M360.5 164v3M360.5 170v3M360.5 176v3M360.5 182v3M360.5 188v3M360.5 194v3M360.5 200v3M360.5 206v3M360.5 212v3M368.5 152v3M368.5 158v3M368.5 164v3M368.5 170v3M368.5 176v3M368.5 182v3M368.5 188v3M368.5 194v3M368.5 200v3M368.5 206v3M368.5 212v3M376.5 158v3M376.5 164v3M376.5 170v3M376.5 176v3M376.5 182v3M376.5 188v3M376.5 194v3M376.5 200v3M376.5 206v3M376.5 212v3M384.5 164v3M384.5 170v3M384.5 176v3M384.5 182v3M384.5 188v3M384.5 194v3M384.5 200v3M384.5 206v3M384.5 212v3M392.5 170v3M392.5 176v3M392.5 182v3M392.5 188v3M392.5 194v3M392.5 200v3M392.5 206v3M392.5 212v3M400.5 170v3M400.5 176v3M400.5 182v3M400.5 188v3M400.5 194v3M400.5 200v3M400.5 206v3M400.5 212v3M408.5 170v3M408.5 176v3M408.5 182v3M408.5 188v3M408.5 194v3M408.5 200v3M408.5 206v3M408.5 212v3M416.5 170v3M416.5 176v3M416.5 182v3M416.5 188v3M416.5 194v3M416.5 200v3M416.5 206v3M416.5 212v3M424.5 164v3M424.5 170v3M424.5 176v3M424.5 182v3M424.5 188v3M424.5 194v3M424.5 200v3M424.5 206v3M424.5 212v3M432.5 158v3M432.5 164v3M432.5 170v3M432.5 176v3M432.5 182v3M432.5 188v3M432.5 194v3M432.5 200v3M432.5 206v3M432.5 212v3M440.5 158v3M440.5 164v3M440.5 170v3M440.5 176v3M440.5 182v3M440.5 188v3M440.5 194v3M440.5 200v3M440.5 206v3M440.5 212v3M448.5 134v3M448.5 140v3M448.5 146v3M448.5 152v3M448.5 158v3M448.5 164v3M448.5 170v3M448.5 176v3M448.5 182v3M456.5 132v3M456.5 138v3M456.5 144v3M456.5 150v3M456.5 156v3M464.5 136v3M464.5 142v3M472.5 134v3M472.5 140v3M480.5 130v3M480.5 136v3M488.5 128v3M488.5 134v3M496.5 134v3M504.5 134v3M512.5 134v3M520.5 134v3M304 112.5h1M312 112.5h1M272 129.5h1M280 129.5h1M496 129.5h1M272 130.5h1M280 130.5h1M496 130.5h1M464 131.5h1M464 132.5h1M528 132.5h1M536 132.5h1M528 133.5h1M536 133.5h1M200 148.5h1M376 153.5h1M376 154.5h1M440 154.5h1M424 159.5h1M424 160.5h1M392 165.5h1M416 165.5h1M176 166.5h1M392 166.5h1M400 166.5h1M408 166.5h1M416 166.5h1M120 220.5h1M136 223.5h1M128 224.5h1M128 225.5h1M8 256.5h1" fill="none" stroke="#f4a460" stroke-width="1"/>
<path d="M544.5 133v3M544.5 139v3M552.5 133v3M552.5 139v3M560.5 133v3M560.5 139v3M560.5 145v3M560.5 151v3M560.5 157v3M568.5 133v3M568.5 139v3M568.5 145v3M568.5 151v3M568.5 157v3M576.5 133v3M576.5 139v3M576.5 145v3M576.5 151v3M584.5 133v3M584.5 139v3M584.5 145v3M592.5 138v3M592.5 144v3M592.5 150v3M600.5 145v3M600.5 151v3M600.5 157v3M600.5 163v3M608.5 146v3M608.5 152v3M608.5 158v3M608.5 164v3M608.5 170v3M616.5 150v3M616.5 156v3M616.5 162v3M616.5 168v3M616.5 174v3M624.5 150v3M624.5 156v3M624.5 162v3M624.5 168v3M624.5 174v3M632.5 150v3M632.5 156v3M632.5 162v3M632.5 168v3M632.5 174v3M640.5 150v3M640.5 156v3M640.5 162v3M640.5 168v3M640.5 174v3M648.5 150v3M648.5 156v3M648.5 162v3M648.5 168v3M648.5 174v3M656.5 150v3M656.5 156v3M656.5 162v3M656.5 168v3M656.5 174v3M664.5 209v3M664.5 215v3M664.5 221v3M664.5 227v3M664.5 233v3M664.5 239v3M672.5 209v3M672.5 215v3M672.5 221v3M672.5 227v3M672.5 233v3M672.5 239v3M680.5 209v3M680.5 215v3M680.5 221v3M680.5 227v3M680.5 233v3M680.5 239v3M688.5 209v3M688.5 215v3M688.5 221v3M688.5 227v3M688.5 233v3M688.5 239v3M552 145.5h1M552 146.5h1M584 151.5h1M592 156.5h1M576 157.5h1M576 158.5h1M600 169.5h1M600 170.5h1" fill="none" stroke="#d8bfd8" stroke-width="1"/>
<path d="M75.5 272v3M77.5 266v3M169.5 192v3M172.5 180v3M175.5 168v3M443.5 145v3M657.5 187v3M658.5 193v3M659.5 199v3M660.5 211v3M661.5 217v3M662.5 223v3M663.5 235v3M664.5 241v3M306 112.5h3M312 112.5h1M301 113.5h2M313 113.5h1M300 114.5h1M313 114.5h1M296 115.5h1M294 116.5h2M316 118.5h1M289 119.5h2M316 119.5h1M288 120.5h1M317 120.5h1M261 121.5h1M255 122.5h1M259 122.5h2M265 122.5h1M253 123.5h2M266 123.5h1M267 124.5h1M284 124.5h1M319 124.5h1M248 125.5h2M284 125.5h1M320 125.5h2M325 125.5h3M331 125.5h3M337 125.5h3M343 125.5h3M349 125.5h3M355 125.5h3M247 126.5h1M283 126.5h1M360 126.5h1M361 127.5h1M271 128.5h1M361 128.5h1M488 128.5h3M272 129.5h2M277 129.5h3M483 129.5h2M494 129.5h3M244 130.5h1M477 130.5h2M482 130.5h1M243 131.5h1M458 131.5h3M464 131.5h3M470 131.5h3M476 131.5h1M500 131.5h2M242 132.5h1M362 132.5h1M452 132.5h3M502 132.5h1M512 132.5h3M518 132.5h3M524 132.5h3M530 132.5h3M536 132.5h1M363 133.5h1M448 133.5h1M506 133.5h3M537 133.5h1M363 134.5h1M448 134.5h1M537 134.5h1M447 135.5h1M239 136.5h1M238 137.5h1M238 138.5h1M364 138.5h1M540 138.5h1M365 139.5h1M446 139.5h1M541 139.5h1M365 140.5h1M445 140.5h1M542 140.5h1M445 141.5h1M236 142.5h1M235 143.5h1M545 143.5h1M235 144.5h1M366 144.5h1M546 144.5h2M208 145.5h2M367 145.5h1M210 146.5h1M367 146.5h1M551 146.5h2M202 147.5h3M553 147.5h1M214 148.5h2M233 148.5h1M196 149.5h3M216 149.5h1M220 149.5h1M232 149.5h1M369 149.5h1M191 150.5h2M221 150.5h2M226 150.5h3M232 150.5h1M370 150.5h2M190 151.5h1M441 151.5h1M555 151.5h1M184 152.5h3M375 152.5h1M441 152.5h1M555 152.5h1M583 152.5h1M376 153.5h1M440 153.5h1M556 153.5h1M582 153.5h1M587 153.5h2M377 154.5h1M581 154.5h1M589 154.5h1M437 155.5h1M182 156.5h1M435 156.5h2M181 157.5h1M431 157.5h1M558 157.5h1M577 157.5h1M593 157.5h1M181 158.5h1M381 158.5h1M429 158.5h2M559 158.5h1M576 158.5h1M593 158.5h1M382 159.5h1M424 159.5h2M559 159.5h1M575 159.5h1M594 159.5h1M383 160.5h1M423 160.5h1M563 161.5h3M570 161.5h2M178 162.5h1M387 162.5h1M569 162.5h1M178 163.5h1M388 163.5h2M419 163.5h1M596 163.5h1M177 164.5h1M417 164.5h2M597 164.5h1M393 165.5h3M413 165.5h1M597 165.5h1M399 166.5h3M405 166.5h3M411 166.5h2M599 169.5h1M600 170.5h1M601 171.5h1M605 173.5h1M174 174.5h1M606 174.5h2M174 175.5h1M173 176.5h1M611 176.5h2M613 177.5h1M617 178.5h3M623 178.5h3M629 178.5h3M635 178.5h3M641 178.5h3M647 178.5h3M653 178.5h3M656 181.5h1M656 182.5h1M657 183.5h1M171 186.5h1M171 187.5h1M170 188.5h1M167 198.5h1M167 199.5h1M166 200.5h1M164 204.5h1M163 205.5h1M659 205.5h1M162 206.5h1M659 206.5h1M660 207.5h1M160 210.5h1M159 211.5h1M159 212.5h1M157 216.5h1M156 217.5h1M155 218.5h1M122 221.5h2M118 222.5h1M124 222.5h1M153 222.5h1M118 223.5h1M134 223.5h3M140 223.5h1M153 223.5h1M117 224.5h1M128 224.5h3M141 224.5h2M146 224.5h3M152 224.5h1M114 228.5h1M113 229.5h1M662 229.5h1M112 230.5h1M662 230.5h1M663 231.5h1M109 234.5h1M108 235.5h1M108 236.5h1M105 240.5h1M104 241.5h1M103 242.5h1M668 243.5h3M674 243.5h3M680 243.5h3M686 243.5h3M101 246.5h1M0 247.5h1M101 247.5h1M1 248.5h1M100 248.5h1M2 249.5h1M98 252.5h1M5 253.5h1M98 253.5h1M6 254.5h1M97 254.5h1M7 255.5h1M11 257.5h1M81 257.5h3M87 257.5h3M93 257.5h3M12 258.5h2M17 260.5h3M23 260.5h3M29 260.5h3M79 260.5h1M79 261.5h1M78 262.5h1M33 263.5h1M33 264.5h1M34 265.5h1M35 269.5h1M36 270.5h1M36 271.5h1M37 275.5h1M38 276.5h1M38 277.5h1M74 278.5h1M73 279.5h1M73 280.5h1M40 281.5h1M40 282.5h2M45 283.5h3M51 283.5h3M57 283.5h3M63 283.5h3M69 283.5h3" fill="none" stroke="#f4a460" stroke-width="1"/>
<path d="M124.5 278v3M126.5 272v3M173.5 223v3M175.5 217v3M442.5 205v3M447.5 187v3M454.5 163v3M657.5 159v3M658.5 165v3M659.5 171v3M660.5 177v3M662.5 195v3M663.5 201v3M664.5 207v3M527 133.5h3M533 133.5h3M539 133.5h3M545 133.5h3M551 133.5h3M557 133.5h3M563 133.5h3M569 133.5h3M575 133.5h3M581 133.5h3M522 135.5h2M587 135.5h2M487 136.5h1M491 136.5h3M497 136.5h3M503 136.5h3M509 136.5h3M515 136.5h3M521 136.5h1M589 136.5h1M485 137.5h2M480 138.5h2M479 139.5h1M593 139.5h1M594 140.5h1M474 141.5h2M595 141.5h1M473 142.5h1M467 143.5h3M599 144.5h1M463 145.5h1M600 145.5h2M463 146.5h1M605 146.5h3M462 147.5h1M611 147.5h1M612 148.5h2M617 150.5h3M623 150.5h3M629 150.5h3M635 150.5h3M641 150.5h3M647 150.5h3M653 150.5h3M460 151.5h1M459 152.5h1M459 153.5h1M656 153.5h1M657 154.5h1M657 155.5h1M457 157.5h1M456 158.5h1M456 159.5h1M453 169.5h1M452 170.5h1M452 171.5h1M451 175.5h1M450 176.5h1M450 177.5h1M449 181.5h1M449 182.5h1M448 183.5h1M660 183.5h1M661 184.5h1M661 185.5h1M661 189.5h1M661 190.5h1M662 191.5h1M446 193.5h1M445 194.5h1M445 195.5h1M444 199.5h1M444 200.5h1M443 201.5h1M668 209.5h3M674 209.5h3M680 209.5h3M686 209.5h3M441 211.5h1M441 212.5h1M440 213.5h1M177 214.5h3M183 214.5h3M189 214.5h3M195 214.5h3M201 214.5h3M207 214.5h3M213 214.5h3M219 214.5h3M225 214.5h3M231 214.5h3M237 214.5h3M243 214.5h3M249 214.5h3M255 214.5h3M261 214.5h3M267 214.5h3M273 214.5h3M279 214.5h3M285 214.5h3M291 214.5h3M297 214.5h3M303 214.5h3M309 214.5h3M315 214.5h3M321 214.5h3M327 214.5h3M333 214.5h3M339 214.5h3M345 214.5h3M351 214.5h3M357 214.5h3M363 214.5h3M369 214.5h3M375 214.5h3M381 214.5h3M387 214.5h3M393 214.5h3M399 214.5h3M405 214.5h3M411 214.5h3M417 214.5h3M423 214.5h3M429 214.5h3M435 214.5h3M172 229.5h1M171 230.5h1M171 231.5h1M170 235.5h1M169 236.5h1M169 237.5h1M167 241.5h2M166 242.5h1M160 243.5h3M156 245.5h1M154 246.5h2M151 249.5h1M150 250.5h1M149 251.5h1M146 255.5h1M145 256.5h1M145 257.5h1M141 258.5h1M139 259.5h2M135 260.5h1M134 261.5h1M133 262.5h1M129 266.5h1M128 267.5h1M128 268.5h1M123 284.5h1M122 285.5h1M122 286.5h1M121 290.5h1M120 291.5h1M0 292.5h3M6 292.5h3M12 292.5h3M18 292.5h3M24 292.5h3M30 292.5h3M36 292.5h3M42 292.5h3M48 292.5h3M54 292.5h3M60 292.5h3M66 292.5h3M72 292.5h3M78 292.5h3M84 292.5h3M90 292.5h3M96 292.5h3M102 292.5h3M108 292.5h3M114 292.5h3M120 292.5h1" fill="none" stroke="#d8bfd8" stroke-width="1"/>
<path d="M57.5 101v3M58.5 104v3M59.5 107v3M61.5 112v3M62.5 115v3M63.5 118v3M76.5 112v3M104.5 88v3M105.5 91v6M106.5 97v6M107.5 103v5M108.5 108v6M109.5 114v5M110.5 119v6M111.5 125v6M112.5 131v3M153.5 136v4M154.5 140v4M155.5 144v4M156.5 148v4M157.5 152v4M158.5 156v4M159.5 160v4M232.5 157v3M233.5 151v6M234.5 146v5M235.5 141v5M236.5 135v6M237.5 130v5M238.5 125v5M239.5 119v6M240.5 116v3M329.5 106v3M331.5 111v3M332.5 114v3M333.5 117v3M335.5 122v3M345.5 134v4M346.5 138v3M347.5 141v4M348.5 145v3M349.5 148v4M350.5 152v3M351.5 155v4M448.5 204v5M449.5 209v8M450.5 217v8M451.5 225v8M452.5 233v8M453.5 241v8M454.5 249v8M455.5 257v8M456.5 265v5M513.5 279v4M514.5 283v4M515.5 287v4M516.5 291v4M517.5 295v4M518.5 299v4M519.5 303v4M-2 75.5h1M-1 76.5h1M0 77.5h1M1 78.5h1M2 79.5h1M3 80.5h2M5 81.5h1M6 82.5h1M7 83.5h1M8 84.5h2M10 85.5h3M13 86.5h2M15 87.5h18M33 88.5h2M96 88.5h8M35 89.5h1M95 89.5h1M36 90.5h1M93 90.5h2M37 91.5h2M92 91.5h1M39 92.5h1M91 92.5h1M40 93.5h1M89 93.5h2M41 94.5h2M88 94.5h1M43 95.5h1M87 95.5h1M44 96.5h1M86 96.5h1M45 97.5h2M86 97.5h1M47 98.5h1M85 98.5h1M48 99.5h9M84 99.5h1M56 100.5h1M83 100.5h1M82 101.5h1M82 102.5h1M81 103.5h1M80 104.5h1M309 104.5h20M80 105.5h1M301 105.5h8M328 105.5h1M79 106.5h1M285 106.5h16M79 107.5h1M280 107.5h5M78 108.5h1M278 108.5h2M78 109.5h1M276 109.5h2M330 109.5h1M60 110.5h1M77 110.5h1M274 110.5h2M330 110.5h1M60 111.5h1M77 111.5h1M269 111.5h5M248 112.5h21M246 113.5h2M244 114.5h2M75 115.5h1M242 115.5h2M75 116.5h1M241 116.5h1M74 117.5h1M74 118.5h1M73 119.5h1M73 120.5h1M334 120.5h1M64 121.5h1M72 121.5h1M334 121.5h1M64 122.5h9M336 125.5h1M336 126.5h1M337 127.5h2M339 128.5h1M340 129.5h1M341 130.5h2M343 131.5h1M344 132.5h1M113 133.5h36M344 133.5h1M149 134.5h4M152 135.5h1M352 159.5h1M230 160.5h2M352 160.5h2M229 161.5h1M354 161.5h2M227 162.5h2M356 162.5h2M225 163.5h2M358 163.5h2M160 164.5h1M224 164.5h1M360 164.5h17M160 165.5h1M222 165.5h2M377 165.5h2M161 166.5h1M220 166.5h2M379 166.5h1M162 167.5h1M218 167.5h2M380 167.5h1M163 168.5h2M216 168.5h2M381 168.5h2M165 169.5h1M215 169.5h1M383 169.5h1M166 170.5h1M215 170.5h1M384 170.5h1M167 171.5h1M214 171.5h1M384 171.5h1M168 172.5h1M213 172.5h1M385 172.5h1M169 173.5h1M212 173.5h1M385 173.5h1M169 174.5h1M212 174.5h1M386 174.5h1M170 175.5h1M211 175.5h1M386 175.5h1M170 176.5h1M210 176.5h1M387 176.5h1M171 177.5h1M209 177.5h1M387 177.5h1M171 178.5h1M209 178.5h1M388 178.5h1M172 179.5h1M207 179.5h2M388 179.5h1M173 180.5h1M205 180.5h2M389 180.5h1M173 181.5h1M202 181.5h3M389 181.5h1M174 182.5h1M200 182.5h2M390 182.5h1M174 183.5h1M198 183.5h2M390 183.5h1M175 184.5h1M196 184.5h2M391 184.5h1M175 185.5h1M194 185.5h2M391 185.5h1M176 186.5h18M392 186.5h1M392 187.5h1M393 188.5h1M393 189.5h1M394 190.5h1M395 191.5h1M396 192.5h1M396 193.5h1M397 194.5h1M398 195.5h1M399 196.5h1M399 197.5h1M400 198.5h1M401 199.5h2M403 200.5h1M404 201.5h1M405 202.5h2M407 203.5h1M408 204.5h40M457 269.5h36M493 270.5h4M497 271.5h2M499 272.5h2M501 273.5h1M502 274.5h2M504 275.5h3M507 276.5h4M511 277.5h2M512 278.5h1M520 307.5h1M520 308.5h2M522 309.5h3M525 310.5h2M527 311.5h10" fill="none" stroke="#ff0000" stroke-width="1"/>
<path d="M24.5 212v3M25.5 208v4M26.5 204v4M27.5 200v4M28.5 195v5M29.5 191v4M30.5 187v4M31.5 183v4M32.5 179v4M33.5 176v3M34.5 173v3M35.5 170v3M37.5 165v3M38.5 162v3M39.5 159v3M106.5 130v3M108.5 125v3M110.5 120v3M448.5 153v5M449.5 158v8M450.5 166v8M451.5 174v8M452.5 182v8M453.5 190v8M454.5 198v8M455.5 206v8M456.5 214v5M481.5 220v3M482.5 223v4M483.5 227v3M484.5 230v3M485.5 233v3M486.5 236v4M487.5 240v3M112 116.5h41M112 117.5h1M152 117.5h1M111 118.5h1M153 118.5h1M111 119.5h1M153 119.5h1M154 120.5h1M154 121.5h1M155 122.5h1M109 123.5h1M155 123.5h1M109 124.5h1M156 124.5h1M156 125.5h1M157 126.5h1M157 127.5h1M107 128.5h1M158 128.5h1M107 129.5h1M158 129.5h1M159 130.5h1M159 131.5h1M160 132.5h1M105 133.5h1M160 133.5h5M105 134.5h1M165 134.5h5M104 135.5h1M170 135.5h3M69 136.5h36M173 136.5h2M64 137.5h5M175 137.5h2M376 137.5h1M63 138.5h1M177 138.5h1M375 138.5h1M377 138.5h2M61 139.5h2M178 139.5h1M375 139.5h1M379 139.5h2M60 140.5h1M179 140.5h2M374 140.5h1M381 140.5h1M59 141.5h1M181 141.5h1M374 141.5h1M382 141.5h2M57 142.5h2M182 142.5h1M373 142.5h1M384 142.5h1M53 143.5h4M183 143.5h1M373 143.5h1M385 143.5h1M48 144.5h5M184 144.5h3M372 144.5h1M385 144.5h1M47 145.5h1M187 145.5h4M372 145.5h1M386 145.5h1M47 146.5h1M191 146.5h3M371 146.5h1M387 146.5h1M46 147.5h1M194 147.5h2M371 147.5h1M388 147.5h1M46 148.5h1M196 148.5h2M370 148.5h1M388 148.5h1M45 149.5h1M198 149.5h2M370 149.5h1M389 149.5h1M44 150.5h1M200 150.5h85M369 150.5h1M390 150.5h1M44 151.5h1M285 151.5h4M369 151.5h1M391 151.5h1M43 152.5h1M289 152.5h1M368 152.5h1M391 152.5h1M42 153.5h1M290 153.5h1M367 153.5h1M392 153.5h56M42 154.5h1M291 154.5h1M366 154.5h1M41 155.5h1M292 155.5h1M365 155.5h1M41 156.5h1M292 156.5h1M364 156.5h1M40 157.5h1M293 157.5h1M363 157.5h1M40 158.5h1M294 158.5h1M362 158.5h1M295 159.5h1M361 159.5h1M296 160.5h65M36 168.5h1M36 169.5h1M-2 214.5h26M457 218.5h24M480 219.5h1M488 243.5h1M488 244.5h33M521 245.5h1M522 246.5h1M523 247.5h1M524 248.5h1M524 249.5h1M525 250.5h1M526 251.5h1M527 252.5h1M528 253.5h1M529 254.5h1M530 255.5h1M531 256.5h2M533 257.5h1M534 258.5h1M535 259.5h1M536 260.5h1" fill="none" stroke="#0000ff" stroke-width="1"/>
<path d="M1.5 84v3M2.5 80v4M3.5 77v3M4.5 74v3M5.5 71v3M6.5 67v4M7.5 64v3M12.5 70v3M16.5 79v6M17.5 85v8M18.5 93v8M19.5 101v8M20.5 109v9M21.5 118v8M22.5 126v8M23.5 134v8M24.5 142v5M33.5 147v4M34.5 143v4M35.5 139v4M36.5 136v3M37.5 132v4M38.5 128v4M39.5 124v4M40.5 121v3M42.5 116v3M44.5 111v3M46.5 106v3M57.5 89v3M58.5 86v3M59.5 83v3M60.5 80v3M61.5 77v3M62.5 74v3M63.5 71v3M64.5 69v4M65.5 73v6M66.5 79v6M67.5 85v6M68.5 91v6M69.5 97v6M70.5 103v6M71.5 109v6M72.5 115v4M107.5 124v3M109.5 119v3M113.5 115v4M114.5 119v4M115.5 123v4M116.5 127v3M117.5 130v4M118.5 134v4M119.5 138v4M120.5 142v3M128.5 159v3M129.5 162v4M130.5 166v5M131.5 171v4M132.5 175v5M133.5 180v4M134.5 184v5M135.5 189v4M136.5 193v3M153.5 190v4M154.5 187v3M155.5 183v4M156.5 180v3M157.5 176v4M158.5 173v3M159.5 169v4M161.5 169v4M162.5 173v4M163.5 177v4M164.5 181v4M165.5 185v4M166.5 189v4M167.5 193v4M168.5 197v4M169.5 201v5M170.5 206v5M171.5 211v5M172.5 216v6M173.5 222v5M174.5 227v5M175.5 232v5M176.5 237v3M177.5 232v5M178.5 227v5M179.5 222v5M180.5 218v4M181.5 213v5M182.5 208v5M183.5 203v5M184.5 199v4M185.5 195v4M186.5 191v4M187.5 187v4M188.5 183v4M189.5 179v4M190.5 175v4M191.5 171v4M224.5 165v3M225.5 168v4M226.5 172v5M227.5 177v4M228.5 181v5M229.5 186v4M230.5 190v5M231.5 195v4M232.5 199v4M233.5 203v4M234.5 207v4M235.5 211v4M236.5 215v3M237.5 218v4M238.5 222v4M239.5 226v4M240.5 230v6M241.5 236v8M242.5 244v8M243.5 252v8M244.5 260v8M245.5 268v8M246.5 276v8M247.5 284v8M248.5 292v5M256.5 295v3M257.5 290v5M258.5 284v6M259.5 279v5M260.5 274v5M261.5 269v5M262.5 263v6M263.5 258v5M264.5 255v4M265.5 259v6M266.5 265v6M267.5 271v6M268.5 277v6M269.5 283v6M270.5 289v6M271.5 295v6M272.5 301v6M273.5 307v8M274.5 315v7M275.5 322v7M276.5 329v8M277.5 337v7M278.5 344v7M279.5 351v8M280.5 359v4M297.5 361v3M298.5 364v3M299.5 367v3M301.5 372v3M302.5 375v3M303.5 378v3M316.5 363v3M320.5 354v3M321.5 350v4M322.5 346v4M323.5 343v3M324.5 339v4M325.5 336v3M326.5 332v4M327.5 328v4M8 62.5h1M8 63.5h1M9 64.5h1M9 65.5h1M10 66.5h1M10 67.5h1M11 68.5h1M11 69.5h1M13 73.5h1M13 74.5h1M14 75.5h1M14 76.5h1M15 77.5h1M15 78.5h1M0 87.5h1M0 88.5h1M56 92.5h1M56 93.5h1M55 94.5h1M54 95.5h1M53 96.5h1M52 97.5h1M52 98.5h1M51 99.5h1M50 100.5h1M49 101.5h1M48 102.5h1M48 103.5h1M47 104.5h1M47 105.5h1M45 109.5h1M45 110.5h1M112 113.5h1M43 114.5h1M112 114.5h1M43 115.5h1M111 115.5h1M111 116.5h1M110 117.5h1M73 118.5h2M110 118.5h1M41 119.5h1M75 119.5h4M41 120.5h1M79 120.5h2M81 121.5h1M82 122.5h1M108 122.5h1M83 123.5h2M108 123.5h1M85 124.5h1M86 125.5h1M87 126.5h1M88 127.5h9M106 127.5h1M97 128.5h2M106 128.5h1M99 129.5h2M105 129.5h1M101 130.5h1M105 130.5h1M102 131.5h3M104 132.5h1M121 145.5h1M121 146.5h1M25 147.5h2M122 147.5h1M27 148.5h1M122 148.5h1M28 149.5h1M123 149.5h1M29 150.5h2M123 150.5h1M31 151.5h2M124 151.5h1M32 152.5h1M124 152.5h1M125 153.5h1M125 154.5h1M126 155.5h1M126 156.5h1M127 157.5h1M127 158.5h1M200 162.5h1M199 163.5h2M198 164.5h1M201 164.5h1M197 165.5h1M201 165.5h1M223 165.5h1M195 166.5h2M202 166.5h1M221 166.5h2M160 167.5h1M194 167.5h1M202 167.5h1M218 167.5h3M160 168.5h1M193 168.5h1M203 168.5h1M216 168.5h2M192 169.5h1M203 169.5h1M215 169.5h1M192 170.5h1M204 170.5h1M214 170.5h1M204 171.5h1M214 171.5h1M205 172.5h1M213 172.5h1M205 173.5h1M212 173.5h1M206 174.5h1M211 174.5h1M206 175.5h1M210 175.5h1M207 176.5h1M210 176.5h1M207 177.5h1M209 177.5h1M208 178.5h1M144 191.5h2M142 192.5h2M146 192.5h2M140 193.5h2M148 193.5h2M138 194.5h2M150 194.5h3M137 195.5h1M152 195.5h1M249 296.5h4M253 297.5h3M328 326.5h1M328 327.5h1M319 357.5h1M319 358.5h1M296 359.5h1M318 359.5h1M294 360.5h3M318 360.5h1M292 361.5h2M317 361.5h1M281 362.5h4M290 362.5h2M317 362.5h1M285 363.5h5M315 366.5h1M315 367.5h1M314 368.5h1M314 369.5h1M300 370.5h1M313 370.5h1M300 371.5h1M313 371.5h1M312 372.5h1M312 373.5h1M311 374.5h1M310 375.5h1M309 376.5h1M308 377.5h1M308 378.5h1M307 379.5h1M306 380.5h1M304 381.5h2M304 382.5h1" fill="none" stroke="#00ff00" stroke-width="1"/>
<path d="M-2.5 71v4M-1.5 75v4M0.5 79v3M1.5 82v4M2.5 86v4M3.5 90v4M4.5 94v3M5.5 97v4M6.5 101v4M7.5 105v4M104.5 94v3M105.5 97v5M106.5 102v5M107.5 107v5M108.5 112v5M109.5 117v5M110.5 122v5M111.5 127v5M112.5 132v3M145.5 145v3M146.5 148v3M147.5 151v3M148.5 154v4M149.5 158v3M150.5 161v3M151.5 164v3M152.5 167v3M153.5 170v3M154.5 173v4M155.5 177v3M156.5 180v3M157.5 183v3M158.5 186v4M159.5 190v3M172.5 174v3M176.5 165v3M180.5 156v3M200.5 125v3M378.5 185v3M380.5 190v3M382.5 195v3M443.5 187v3M445.5 192v3M448.5 199v3M449.5 202v4M450.5 206v4M451.5 210v3M452.5 213v4M453.5 217v3M454.5 220v4M455.5 224v4M456.5 228v3M457.5 231v3M458.5 234v3M459.5 237v3M460.5 240v3M461.5 243v3M462.5 246v3M463.5 249v3M481.5 271v4M482.5 275v4M483.5 279v4M484.5 283v4M485.5 287v4M486.5 291v4M487.5 295v4M488.5 299v3M490.5 304v3M492.5 309v3M494.5 314v3M96 90.5h2M94 91.5h2M98 91.5h2M93 92.5h1M100 92.5h2M224 92.5h1M91 93.5h2M102 93.5h2M222 93.5h3M89 94.5h2M221 94.5h1M225 94.5h1M88 95.5h1M219 95.5h2M225 95.5h1M86 96.5h2M217 96.5h2M226 96.5h1M272 96.5h1M85 97.5h1M216 97.5h1M226 97.5h1M271 97.5h1M273 97.5h1M83 98.5h2M215 98.5h1M227 98.5h1M270 98.5h1M274 98.5h1M81 99.5h2M215 99.5h1M227 99.5h1M270 99.5h1M275 99.5h2M80 100.5h1M214 100.5h1M228 100.5h1M269 100.5h1M277 100.5h1M40 101.5h2M79 101.5h1M214 101.5h1M228 101.5h1M268 101.5h1M278 101.5h1M39 102.5h1M42 102.5h3M79 102.5h1M213 102.5h1M229 102.5h1M267 102.5h1M279 102.5h1M39 103.5h1M45 103.5h2M78 103.5h1M212 103.5h1M229 103.5h1M266 103.5h1M280 103.5h1M38 104.5h1M47 104.5h2M78 104.5h1M212 104.5h1M230 104.5h1M266 104.5h1M281 104.5h2M38 105.5h1M49 105.5h1M77 105.5h1M211 105.5h1M230 105.5h1M265 105.5h1M283 105.5h1M37 106.5h1M50 106.5h1M76 106.5h1M210 106.5h1M231 106.5h1M264 106.5h1M284 106.5h1M37 107.5h1M51 107.5h2M76 107.5h1M210 107.5h1M231 107.5h1M263 107.5h1M285 107.5h2M36 108.5h1M53 108.5h1M75 108.5h1M209 108.5h1M232 108.5h1M262 108.5h1M287 108.5h1M8 109.5h1M35 109.5h1M54 109.5h1M74 109.5h1M209 109.5h1M232 109.5h1M262 109.5h1M288 109.5h1M8 110.5h1M35 110.5h1M55 110.5h1M74 110.5h1M208 110.5h1M233 110.5h1M261 110.5h1M289 110.5h2M9 111.5h2M34 111.5h1M56 111.5h2M73 111.5h1M207 111.5h1M233 111.5h1M260 111.5h1M291 111.5h1M11 112.5h1M34 112.5h1M58 112.5h3M73 112.5h1M207 112.5h1M234 112.5h1M259 112.5h1M292 112.5h1M12 113.5h1M33 113.5h1M61 113.5h2M69 113.5h4M206 113.5h1M234 113.5h1M258 113.5h1M293 113.5h2M13 114.5h2M33 114.5h1M63 114.5h6M206 114.5h1M235 114.5h1M258 114.5h1M295 114.5h1M15 115.5h1M32 115.5h1M205 115.5h1M235 115.5h1M257 115.5h1M296 115.5h2M16 116.5h2M30 116.5h2M205 116.5h1M236 116.5h1M256 116.5h1M298 116.5h2M18 117.5h2M29 117.5h1M204 117.5h1M236 117.5h1M255 117.5h1M300 117.5h2M20 118.5h2M27 118.5h2M204 118.5h1M237 118.5h1M253 118.5h2M302 118.5h2M22 119.5h2M25 119.5h2M203 119.5h1M237 119.5h1M252 119.5h1M304 119.5h2M319 119.5h2M24 120.5h1M203 120.5h1M238 120.5h1M251 120.5h1M306 120.5h3M317 120.5h2M321 120.5h1M202 121.5h1M238 121.5h1M249 121.5h2M309 121.5h2M314 121.5h3M322 121.5h1M202 122.5h1M239 122.5h1M247 122.5h2M311 122.5h3M323 122.5h2M201 123.5h1M239 123.5h1M243 123.5h4M325 123.5h1M201 124.5h1M240 124.5h3M326 124.5h1M327 125.5h1M328 126.5h1M329 127.5h1M199 128.5h1M329 128.5h1M199 129.5h1M330 129.5h1M198 130.5h1M331 130.5h1M198 131.5h1M331 131.5h1M197 132.5h1M332 132.5h1M197 133.5h1M333 133.5h1M196 134.5h1M333 134.5h1M113 135.5h1M196 135.5h1M334 135.5h1M114 136.5h1M195 136.5h1M335 136.5h1M115 137.5h1M195 137.5h1M335 137.5h1M116 138.5h1M194 138.5h1M336 138.5h1M117 139.5h1M194 139.5h1M336 139.5h1M118 140.5h1M193 140.5h1M337 140.5h1M119 141.5h1M193 141.5h1M337 141.5h1M120 142.5h3M192 142.5h1M338 142.5h1M123 143.5h4M141 143.5h4M192 143.5h1M338 143.5h1M127 144.5h14M144 144.5h1M190 144.5h2M339 144.5h1M189 145.5h1M339 145.5h1M187 146.5h2M340 146.5h1M185 147.5h2M340 147.5h1M184 148.5h1M341 148.5h1M184 149.5h1M341 149.5h1M183 150.5h1M342 150.5h1M183 151.5h1M342 151.5h1M182 152.5h1M343 152.5h1M182 153.5h1M343 153.5h1M181 154.5h1M344 154.5h1M181 155.5h1M344 155.5h1M345 156.5h1M345 157.5h1M346 158.5h1M179 159.5h1M347 159.5h1M179 160.5h1M347 160.5h1M178 161.5h1M348 161.5h1M178 162.5h1M349 162.5h1M177 163.5h1M349 163.5h1M177 164.5h1M350 164.5h1M351 165.5h1M351 166.5h1M352 167.5h1M175 168.5h1M353 168.5h1M175 169.5h1M354 169.5h1M174 170.5h1M354 170.5h1M174 171.5h1M355 171.5h1M173 172.5h1M356 172.5h1M173 173.5h1M357 173.5h1M368 173.5h1M431 173.5h2M358 174.5h1M366 174.5h2M369 174.5h1M429 174.5h2M433 174.5h1M358 175.5h1M364 175.5h2M370 175.5h1M426 175.5h3M434 175.5h1M359 176.5h1M362 176.5h2M371 176.5h1M423 176.5h3M435 176.5h1M171 177.5h1M360 177.5h2M372 177.5h1M421 177.5h2M436 177.5h1M171 178.5h1M373 178.5h1M418 178.5h3M437 178.5h1M170 179.5h1M374 179.5h1M415 179.5h3M438 179.5h1M170 180.5h1M375 180.5h1M411 180.5h4M439 180.5h1M169 181.5h1M376 181.5h1M408 181.5h3M440 181.5h1M169 182.5h1M376 182.5h1M407 182.5h1M440 182.5h1M168 183.5h1M377 183.5h1M406 183.5h1M441 183.5h1M168 184.5h1M377 184.5h1M406 184.5h1M441 184.5h1M167 185.5h1M405 185.5h1M442 185.5h1M166 186.5h1M404 186.5h1M442 186.5h1M166 187.5h1M403 187.5h1M165 188.5h1M379 188.5h1M402 188.5h1M164 189.5h1M379 189.5h1M402 189.5h1M163 190.5h1M401 190.5h1M444 190.5h1M162 191.5h1M400 191.5h1M444 191.5h1M162 192.5h1M399 192.5h1M160 193.5h2M381 193.5h1M398 193.5h1M160 194.5h1M381 194.5h1M398 194.5h1M397 195.5h1M446 195.5h1M396 196.5h1M446 196.5h1M395 197.5h1M447 197.5h1M383 198.5h1M394 198.5h1M447 198.5h1M383 199.5h1M394 199.5h1M384 200.5h1M393 200.5h1M384 201.5h9M464 252.5h1M464 253.5h5M469 254.5h4M473 255.5h1M473 256.5h1M474 257.5h1M474 258.5h1M475 259.5h1M475 260.5h1M476 261.5h1M476 262.5h1M477 263.5h1M477 264.5h1M478 265.5h1M478 266.5h1M479 267.5h1M479 268.5h1M480 269.5h1M480 270.5h1M489 302.5h1M489 303.5h1M491 307.5h1M491 308.5h1M493 312.5h1M493 313.5h1M495 317.5h1M495 318.5h1M496 319.5h1M496 320.5h1M497 321.5h1M497 322.5h1M498 323.5h1M498 324.5h1M499 325.5h1M499 326.5h1M500 327.5h1M501 328.5h1M501 329.5h1M502 330.5h1M502 331.5h1M503 332.5h1M503 333.5h1M504 334.5h1M504 335.5h1M505 336.5h1M505 337.5h1M506 338.5h1M506 339.5h1M507 340.5h1M507 341.5h1M508 342.5h1M508 343.5h1M509 344.5h1M509 345.5h1M510 346.5h1M510 347.5h1M511 348.5h1M536 348.5h1M511 349.5h1M535 349.5h1M512 350.5h1M534 350.5h1M513 351.5h1M533 351.5h1M514 352.5h1M532 352.5h1M515 353.5h1M532 353.5h1M516 354.5h1M531 354.5h1M517 355.5h1M530 355.5h1M518 356.5h1M529 356.5h1M519 357.5h1M525 357.5h4M520 358.5h5" fill="none" stroke="#ffff00" stroke-width="1"/>
</g>
<rect x="0" y="3" width="695" height="1" fill="#fff" />
<rect x="694" y="3" width="1" height="731" fill="#fff"/>
<rect x="0" y="403" width="695" height="1" fill="#fff" />
<rect x="0" y="405" width="695" height="1" fill="#fff" />
<rect x="0" y="479" width="695" height="1" fill="#fff" />
<rect x="0" y="481" width="695" height="1" fill="#fff" />
<rect x="0" y="548" width="695" height="1" fill="#fff" />
<rect x="0" y="550" width="695" height="1" fill="#fff" />
<rect x="0" y="622" width="695" height="1" fill="#fff" />
<rect x="0" y="624" width="695" height="1" fill="#fff" />
<rect x="0" y="683" width="695" height="1" fill="#fff" />
<rect x="0" y="685" width="695" height="1" fill="#fff" />
<rect x="0" y="733" width="695" height="1" fill="#fff" />
<g clip-path="url(#cw)">
<line x1="1" y1="417.5" x2="694" y2="417.5" stroke="#c0c0c0" stroke-width="1" stroke-dasharray="3 3"/>
<line x1="1" y1="448.5" x2="694" y2="448.5" stroke="#c0c0c0" stroke-width="1" stroke-dasharray="3 3"/>
<line x1="1" y1="502.5" x2="694" y2="502.5" stroke="#c0c0c0" stroke-width="1" stroke-dasharray="3 3"/>
<line x1="1" y1="528.5" x2="694" y2="528.5" stroke="#c0c0c0" stroke-width="1" stroke-dasharray="3 3"/>
<line x1="1" y1="565.5" x2="694" y2="565.5" stroke="#c0c0c0" stroke-width="1" stroke-dasharray="3 3"/>
<line x1="1" y1="607.5" x2="694" y2="607.5" stroke="#c0c0c0" stroke-width="1" stroke-dasharray="3 3"/>
<path d="M75.5 432v3M77.5 427v3M104.5 425v3M105.5 428v4M106.5 432v5M107.5 437v4M108.5 441v5M109.5 446v4M110.5 450v5M111.5 455v4M112.5 459v3M284.5 433v3M449.5 451v3M450.5 454v4M451.5 458v3M452.5 461v3M453.5 464v3M454.5 467v4M455.5 471v3M216 410.5h1M214 411.5h2M217 411.5h2M213 412.5h1M219 412.5h2M211 413.5h2M221 413.5h1M209 414.5h2M222 414.5h2M208 415.5h1M224 415.5h1M207 416.5h1M225 416.5h1M205 417.5h2M225 417.5h1M204 418.5h1M226 418.5h1M203 419.5h1M226 419.5h1M201 420.5h2M227 420.5h1M269 420.5h4M80 421.5h18M200 421.5h1M227 421.5h1M264 421.5h5M273 421.5h2M80 422.5h1M98 422.5h2M198 422.5h2M228 422.5h1M262 422.5h2M275 422.5h2M432 422.5h1M79 423.5h1M100 423.5h2M197 423.5h1M229 423.5h1M260 423.5h2M277 423.5h1M431 423.5h1M433 423.5h1M79 424.5h1M102 424.5h2M195 424.5h2M229 424.5h1M258 424.5h2M278 424.5h2M430 424.5h1M433 424.5h1M78 425.5h1M184 425.5h5M193 425.5h2M230 425.5h1M256 425.5h2M280 425.5h1M429 425.5h1M434 425.5h1M78 426.5h1M183 426.5h1M189 426.5h4M230 426.5h1M255 426.5h1M280 426.5h1M428 426.5h1M435 426.5h1M182 427.5h1M231 427.5h1M253 427.5h2M281 427.5h1M427 427.5h1M435 427.5h1M-2 428.5h1M181 428.5h1M231 428.5h1M252 428.5h1M281 428.5h1M426 428.5h1M436 428.5h1M-2 429.5h1M180 429.5h1M232 429.5h1M251 429.5h1M282 429.5h1M408 429.5h5M425 429.5h1M437 429.5h1M-1 430.5h1M40 430.5h1M76 430.5h1M179 430.5h1M233 430.5h1M249 430.5h2M282 430.5h1M407 430.5h1M413 430.5h12M437 430.5h1M0 431.5h1M39 431.5h1M41 431.5h2M76 431.5h1M178 431.5h1M234 431.5h1M248 431.5h1M283 431.5h1M406 431.5h1M438 431.5h1M1 432.5h1M38 432.5h1M43 432.5h2M177 432.5h1M235 432.5h2M246 432.5h2M283 432.5h1M320 432.5h1M405 432.5h1M439 432.5h1M1 433.5h1M37 433.5h1M45 433.5h1M176 433.5h1M237 433.5h1M245 433.5h1M319 433.5h1M321 433.5h1M403 433.5h2M439 433.5h1M2 434.5h1M35 434.5h2M46 434.5h2M175 434.5h1M238 434.5h1M243 434.5h2M319 434.5h1M321 434.5h1M402 434.5h1M440 434.5h1M3 435.5h1M34 435.5h1M48 435.5h1M74 435.5h1M175 435.5h1M239 435.5h1M241 435.5h2M318 435.5h1M322 435.5h1M401 435.5h1M441 435.5h1M4 436.5h1M33 436.5h1M49 436.5h1M74 436.5h1M174 436.5h1M240 436.5h1M285 436.5h1M318 436.5h1M323 436.5h1M400 436.5h1M441 436.5h1M4 437.5h1M32 437.5h1M50 437.5h1M73 437.5h1M174 437.5h1M285 437.5h1M317 437.5h1M324 437.5h1M399 437.5h1M442 437.5h1M5 438.5h1M30 438.5h2M51 438.5h2M73 438.5h1M173 438.5h1M286 438.5h1M316 438.5h1M324 438.5h1M399 438.5h1M442 438.5h1M6 439.5h1M29 439.5h1M53 439.5h1M63 439.5h6M72 439.5h1M172 439.5h1M286 439.5h1M296 439.5h2M316 439.5h1M325 439.5h1M398 439.5h1M443 439.5h1M536 439.5h1M7 440.5h1M27 440.5h2M54 440.5h1M61 440.5h2M69 440.5h4M172 440.5h1M287 440.5h1M294 440.5h2M298 440.5h2M315 440.5h1M326 440.5h1M397 440.5h1M443 440.5h1M534 440.5h2M7 441.5h1M25 441.5h2M55 441.5h1M58 441.5h3M143 441.5h2M171 441.5h1M287 441.5h1M292 441.5h2M300 441.5h2M314 441.5h1M327 441.5h1M397 441.5h1M444 441.5h1M533 441.5h1M8 442.5h5M21 442.5h4M56 442.5h2M141 442.5h2M145 442.5h1M170 442.5h1M288 442.5h1M290 442.5h2M302 442.5h2M314 442.5h1M327 442.5h1M396 442.5h1M444 442.5h1M531 442.5h2M13 443.5h8M128 443.5h5M138 443.5h3M145 443.5h1M170 443.5h1M288 443.5h2M304 443.5h3M313 443.5h1M328 443.5h1M395 443.5h1M445 443.5h1M529 443.5h2M127 444.5h1M133 444.5h5M146 444.5h1M169 444.5h1M307 444.5h4M313 444.5h1M329 444.5h1M368 444.5h5M395 444.5h1M445 444.5h1M527 444.5h2M126 445.5h1M146 445.5h1M169 445.5h1M311 445.5h2M329 445.5h1M367 445.5h1M373 445.5h4M394 445.5h1M446 445.5h1M523 445.5h4M125 446.5h1M147 446.5h1M168 446.5h1M330 446.5h1M367 446.5h1M377 446.5h1M393 446.5h1M446 446.5h1M472 446.5h2M519 446.5h4M124 447.5h1M148 447.5h1M167 447.5h1M330 447.5h1M366 447.5h1M378 447.5h1M393 447.5h1M447 447.5h1M471 447.5h1M474 447.5h2M517 447.5h2M124 448.5h1M148 448.5h1M167 448.5h1M331 448.5h1M365 448.5h1M379 448.5h1M392 448.5h1M447 448.5h1M471 448.5h1M476 448.5h2M514 448.5h3M123 449.5h1M149 449.5h1M166 449.5h1M331 449.5h1M365 449.5h1M380 449.5h1M390 449.5h2M448 449.5h1M470 449.5h1M478 449.5h2M503 449.5h11M122 450.5h1M150 450.5h1M166 450.5h1M332 450.5h1M364 450.5h1M381 450.5h1M389 450.5h1M448 450.5h1M470 450.5h1M480 450.5h1M501 450.5h2M121 451.5h1M150 451.5h1M165 451.5h1M332 451.5h1M363 451.5h1M382 451.5h1M387 451.5h2M469 451.5h1M481 451.5h2M498 451.5h3M120 452.5h1M151 452.5h1M164 452.5h1M333 452.5h1M363 452.5h1M383 452.5h1M385 452.5h2M469 452.5h1M483 452.5h1M496 452.5h2M119 453.5h1M151 453.5h1M164 453.5h1M333 453.5h1M362 453.5h1M384 453.5h1M468 453.5h1M484 453.5h1M494 453.5h2M118 454.5h1M152 454.5h1M163 454.5h1M334 454.5h1M361 454.5h1M468 454.5h1M485 454.5h2M492 454.5h2M117 455.5h1M153 455.5h2M162 455.5h1M334 455.5h1M361 455.5h1M467 455.5h1M487 455.5h1M490 455.5h2M116 456.5h1M155 456.5h2M162 456.5h1M335 456.5h1M359 456.5h2M467 456.5h1M488 456.5h2M116 457.5h1M157 457.5h1M161 457.5h1M335 457.5h1M357 457.5h2M466 457.5h1M115 458.5h1M158 458.5h2M161 458.5h1M336 458.5h1M354 458.5h3M466 458.5h1M114 459.5h1M160 459.5h1M337 459.5h2M352 459.5h2M465 459.5h1M113 460.5h1M339 460.5h2M350 460.5h2M465 460.5h1M341 461.5h1M348 461.5h2M464 461.5h1M342 462.5h2M346 462.5h2M463 462.5h1M344 463.5h2M463 463.5h1M462 464.5h1M462 465.5h1M461 466.5h1M461 467.5h1M460 468.5h1M459 469.5h1M459 470.5h1M458 471.5h1M458 472.5h1M457 473.5h1M456 474.5h2M456 475.5h1" fill="none" stroke="#20b2aa" stroke-width="1"/>
<path d="M39 510.5h3M79 510.5h4M213 510.5h8M-2 511.5h2M35 511.5h4M42 511.5h3M77 511.5h2M83 511.5h4M93 511.5h6M205 511.5h8M221 511.5h4M269 511.5h5M0 512.5h2M31 512.5h4M45 512.5h2M74 512.5h3M87 512.5h6M99 512.5h4M183 512.5h4M199 512.5h6M225 512.5h2M261 512.5h8M274 512.5h2M2 513.5h2M27 513.5h4M47 513.5h6M69 513.5h5M103 513.5h2M179 513.5h4M187 513.5h4M195 513.5h4M227 513.5h2M253 513.5h8M276 513.5h2M4 514.5h2M15 514.5h12M53 514.5h16M105 514.5h1M175 514.5h4M191 514.5h4M229 514.5h1M247 514.5h6M278 514.5h2M319 514.5h3M6 515.5h2M11 515.5h4M106 515.5h1M171 515.5h4M230 515.5h2M245 515.5h2M280 515.5h29M315 515.5h4M322 515.5h3M405 515.5h6M8 516.5h3M107 516.5h1M125 516.5h20M168 516.5h3M232 516.5h5M242 516.5h3M309 516.5h6M325 516.5h2M400 516.5h5M411 516.5h4M421 516.5h13M108 517.5h1M120 517.5h5M145 517.5h2M167 517.5h1M237 517.5h5M327 517.5h6M398 517.5h2M415 517.5h6M434 517.5h3M108 518.5h1M118 518.5h2M147 518.5h2M166 518.5h1M333 518.5h5M367 518.5h3M396 518.5h2M437 518.5h2M109 519.5h1M117 519.5h1M149 519.5h1M165 519.5h1M338 519.5h2M365 519.5h2M370 519.5h3M394 519.5h2M439 519.5h3M110 520.5h1M115 520.5h2M150 520.5h2M163 520.5h2M340 520.5h2M362 520.5h3M373 520.5h2M392 520.5h2M442 520.5h3M111 521.5h1M113 521.5h2M152 521.5h3M162 521.5h1M342 521.5h2M349 521.5h13M375 521.5h3M390 521.5h2M445 521.5h2M472 521.5h2M112 522.5h1M155 522.5h4M161 522.5h1M344 522.5h5M378 522.5h3M388 522.5h2M447 522.5h2M471 522.5h1M474 522.5h2M535 522.5h2M159 523.5h2M381 523.5h2M386 523.5h2M449 523.5h2M469 523.5h2M476 523.5h2M533 523.5h2M383 524.5h3M451 524.5h2M468 524.5h1M478 524.5h2M530 524.5h3M453 525.5h1M467 525.5h1M480 525.5h2M527 525.5h3M454 526.5h2M465 526.5h2M482 526.5h3M525 526.5h2M456 527.5h9M485 527.5h2M522 527.5h3M487 528.5h22M517 528.5h5M509 529.5h8" fill="none" stroke="#1e90ff" stroke-width="1"/>
<path d="M170.5 591v3M172.5 586v3M174.5 581v3M176.5 576v3M226.5 564v3M228.5 569v3M230.5 574v3M232.5 579v3M442.5 585v3M443.5 588v3M445.5 593v3M446.5 596v3M529.5 605v3M530.5 602v3M531.5 599v3M532.5 596v3M533.5 593v3M534.5 590v3M535.5 587v3M216 556.5h2M214 557.5h2M218 557.5h2M212 558.5h2M220 558.5h2M210 559.5h2M222 559.5h2M184 560.5h26M224 560.5h1M184 561.5h1M224 561.5h1M183 562.5h1M225 562.5h1M183 563.5h1M225 563.5h1M182 564.5h1M182 565.5h1M416 565.5h5M181 566.5h1M414 566.5h2M421 566.5h5M181 567.5h1M227 567.5h1M412 567.5h2M426 567.5h2M180 568.5h1M227 568.5h1M410 568.5h2M428 568.5h2M180 569.5h1M408 569.5h2M430 569.5h2M48 570.5h1M179 570.5h1M408 570.5h1M432 570.5h1M47 571.5h1M49 571.5h1M179 571.5h1M272 571.5h1M407 571.5h1M433 571.5h1M46 572.5h1M50 572.5h1M178 572.5h1M229 572.5h1M271 572.5h1M273 572.5h2M407 572.5h1M433 572.5h1M45 573.5h1M51 573.5h2M178 573.5h1M229 573.5h1M271 573.5h1M275 573.5h2M406 573.5h1M434 573.5h1M43 574.5h2M53 574.5h1M177 574.5h1M270 574.5h1M277 574.5h1M406 574.5h1M435 574.5h1M42 575.5h1M54 575.5h1M177 575.5h1M269 575.5h1M278 575.5h2M405 575.5h1M436 575.5h1M41 576.5h1M55 576.5h1M268 576.5h1M280 576.5h1M405 576.5h1M436 576.5h1M40 577.5h1M56 577.5h1M231 577.5h1M268 577.5h1M281 577.5h1M404 577.5h1M437 577.5h1M39 578.5h1M57 578.5h1M231 578.5h1M267 578.5h1M282 578.5h1M404 578.5h1M438 578.5h1M39 579.5h1M57 579.5h1M175 579.5h1M266 579.5h1M283 579.5h1M403 579.5h1M439 579.5h1M38 580.5h1M58 580.5h1M175 580.5h1M265 580.5h1M284 580.5h1M403 580.5h1M439 580.5h1M38 581.5h1M58 581.5h1M144 581.5h1M265 581.5h1M285 581.5h1M402 581.5h1M440 581.5h1M37 582.5h1M59 582.5h1M143 582.5h1M145 582.5h1M233 582.5h1M264 582.5h1M286 582.5h1M402 582.5h1M440 582.5h1M36 583.5h1M60 583.5h1M95 583.5h2M142 583.5h1M146 583.5h1M233 583.5h1M263 583.5h1M287 583.5h1M401 583.5h1M441 583.5h1M36 584.5h1M60 584.5h1M91 584.5h4M97 584.5h1M141 584.5h1M147 584.5h2M173 584.5h1M234 584.5h1M263 584.5h1M288 584.5h1M401 584.5h1M441 584.5h1M35 585.5h1M61 585.5h1M87 585.5h4M98 585.5h1M139 585.5h2M149 585.5h1M173 585.5h1M234 585.5h1M262 585.5h1M289 585.5h1M400 585.5h1M536 585.5h1M34 586.5h1M62 586.5h1M85 586.5h2M99 586.5h2M138 586.5h1M150 586.5h1M235 586.5h1M261 586.5h1M289 586.5h1M400 586.5h1M536 586.5h1M34 587.5h1M62 587.5h1M82 587.5h3M101 587.5h1M137 587.5h1M151 587.5h1M235 587.5h1M261 587.5h1M290 587.5h1M336 587.5h1M399 587.5h1M33 588.5h1M63 588.5h1M80 588.5h2M102 588.5h1M136 588.5h1M152 588.5h1M236 588.5h1M260 588.5h1M291 588.5h1M335 588.5h1M337 588.5h1M399 588.5h1M33 589.5h1M63 589.5h1M79 589.5h1M103 589.5h1M135 589.5h1M153 589.5h1M171 589.5h1M236 589.5h1M259 589.5h1M291 589.5h1M333 589.5h2M337 589.5h1M398 589.5h1M32 590.5h1M64 590.5h2M77 590.5h2M104 590.5h1M134 590.5h1M153 590.5h1M171 590.5h1M237 590.5h1M259 590.5h1M292 590.5h1M332 590.5h1M338 590.5h1M376 590.5h1M397 590.5h1M472 590.5h10M31 591.5h1M66 591.5h2M76 591.5h1M105 591.5h1M134 591.5h1M154 591.5h1M237 591.5h1M258 591.5h1M293 591.5h1M331 591.5h1M339 591.5h1M374 591.5h2M377 591.5h2M396 591.5h1M444 591.5h1M471 591.5h1M482 591.5h2M31 592.5h1M68 592.5h2M75 592.5h1M105 592.5h1M133 592.5h1M155 592.5h1M238 592.5h1M257 592.5h1M293 592.5h1M329 592.5h2M339 592.5h1M373 592.5h1M379 592.5h1M396 592.5h1M444 592.5h1M470 592.5h1M484 592.5h2M30 593.5h1M70 593.5h2M73 593.5h2M106 593.5h1M132 593.5h1M156 593.5h1M238 593.5h1M257 593.5h1M294 593.5h1M325 593.5h4M340 593.5h1M371 593.5h2M380 593.5h1M395 593.5h1M469 593.5h1M486 593.5h2M30 594.5h1M72 594.5h1M107 594.5h1M131 594.5h1M156 594.5h1M169 594.5h1M239 594.5h1M256 594.5h1M295 594.5h1M320 594.5h5M341 594.5h1M369 594.5h2M381 594.5h2M394 594.5h1M467 594.5h2M488 594.5h1M29 595.5h1M108 595.5h1M130 595.5h1M157 595.5h1M169 595.5h1M239 595.5h1M255 595.5h1M295 595.5h1M319 595.5h1M341 595.5h1M368 595.5h1M383 595.5h1M393 595.5h1M466 595.5h1M489 595.5h1M29 596.5h1M108 596.5h1M130 596.5h1M158 596.5h1M168 596.5h1M240 596.5h1M254 596.5h1M296 596.5h3M318 596.5h1M342 596.5h1M367 596.5h1M384 596.5h5M393 596.5h1M465 596.5h1M490 596.5h1M28 597.5h1M109 597.5h1M129 597.5h1M159 597.5h1M167 597.5h2M240 597.5h1M253 597.5h1M299 597.5h4M317 597.5h1M343 597.5h1M366 597.5h1M389 597.5h4M464 597.5h1M490 597.5h1M27 598.5h1M110 598.5h1M128 598.5h1M159 598.5h1M163 598.5h4M241 598.5h2M252 598.5h1M303 598.5h3M315 598.5h2M343 598.5h1M365 598.5h1M462 598.5h2M491 598.5h1M27 599.5h1M111 599.5h1M126 599.5h2M160 599.5h3M243 599.5h1M252 599.5h1M306 599.5h3M314 599.5h1M344 599.5h5M364 599.5h1M447 599.5h1M461 599.5h1M492 599.5h1M26 600.5h1M111 600.5h1M124 600.5h2M244 600.5h1M251 600.5h1M309 600.5h2M313 600.5h1M349 600.5h5M363 600.5h1M447 600.5h1M459 600.5h2M493 600.5h1M26 601.5h1M112 601.5h5M122 601.5h2M245 601.5h2M250 601.5h1M311 601.5h2M354 601.5h3M362 601.5h1M448 601.5h1M457 601.5h2M494 601.5h1M25 602.5h1M117 602.5h5M247 602.5h1M249 602.5h1M357 602.5h2M361 602.5h1M448 602.5h9M494 602.5h1M25 603.5h1M248 603.5h1M359 603.5h2M495 603.5h1M-2 604.5h2M23 604.5h2M496 604.5h1M0 605.5h1M21 605.5h2M497 605.5h2M1 606.5h2M18 606.5h3M499 606.5h1M3 607.5h1M16 607.5h2M500 607.5h1M4 608.5h1M14 608.5h2M501 608.5h2M528 608.5h1M5 609.5h2M12 609.5h2M503 609.5h1M528 609.5h1M7 610.5h1M10 610.5h2M504 610.5h2M526 610.5h2M8 611.5h2M506 611.5h2M524 611.5h2M508 612.5h2M522 612.5h2M510 613.5h2M517 613.5h5M512 614.5h5" fill="none" stroke="#20b2aa" stroke-width="1"/>
<path d="M213 559.5h12M200 560.5h13M225 560.5h2M198 561.5h2M227 561.5h1M197 562.5h1M228 562.5h1M195 563.5h2M229 563.5h2M193 564.5h2M231 564.5h1M192 565.5h1M232 565.5h1M191 566.5h1M233 566.5h1M424 566.5h5M191 567.5h1M233 567.5h1M423 567.5h1M429 567.5h4M190 568.5h1M234 568.5h1M422 568.5h1M433 568.5h2M190 569.5h1M234 569.5h1M421 569.5h1M435 569.5h2M189 570.5h1M235 570.5h1M419 570.5h2M437 570.5h1M188 571.5h1M235 571.5h1M418 571.5h1M438 571.5h2M188 572.5h1M236 572.5h1M417 572.5h1M440 572.5h1M187 573.5h1M237 573.5h1M416 573.5h1M441 573.5h1M186 574.5h1M237 574.5h1M415 574.5h1M441 574.5h1M56 575.5h2M186 575.5h1M238 575.5h1M415 575.5h1M442 575.5h1M54 576.5h2M58 576.5h2M185 576.5h1M238 576.5h1M280 576.5h5M414 576.5h1M442 576.5h1M52 577.5h2M60 577.5h2M185 577.5h1M239 577.5h1M279 577.5h1M285 577.5h4M413 577.5h1M443 577.5h1M50 578.5h2M62 578.5h2M184 578.5h1M239 578.5h1M278 578.5h1M289 578.5h1M412 578.5h1M444 578.5h1M48 579.5h2M64 579.5h1M183 579.5h1M240 579.5h1M277 579.5h1M290 579.5h1M412 579.5h1M444 579.5h1M47 580.5h1M65 580.5h1M183 580.5h1M241 580.5h1M275 580.5h2M291 580.5h1M411 580.5h1M445 580.5h1M47 581.5h1M66 581.5h1M182 581.5h1M241 581.5h1M274 581.5h1M292 581.5h1M410 581.5h1M446 581.5h1M46 582.5h1M67 582.5h1M182 582.5h1M242 582.5h1M273 582.5h1M293 582.5h1M409 582.5h1M446 582.5h1M45 583.5h1M68 583.5h1M181 583.5h1M242 583.5h1M272 583.5h1M294 583.5h1M409 583.5h1M447 583.5h1M44 584.5h1M69 584.5h1M181 584.5h1M243 584.5h1M271 584.5h1M295 584.5h1M408 584.5h1M447 584.5h1M44 585.5h1M70 585.5h1M96 585.5h5M180 585.5h1M243 585.5h1M270 585.5h1M296 585.5h1M407 585.5h1M448 585.5h1M-2 586.5h1M43 586.5h1M71 586.5h1M94 586.5h2M101 586.5h4M151 586.5h3M179 586.5h1M244 586.5h1M270 586.5h1M297 586.5h1M406 586.5h1M449 586.5h1M-1 587.5h1M42 587.5h1M72 587.5h2M92 587.5h2M105 587.5h2M149 587.5h2M154 587.5h3M179 587.5h1M245 587.5h1M269 587.5h1M298 587.5h1M405 587.5h1M450 587.5h1M-1 588.5h1M41 588.5h1M74 588.5h2M90 588.5h2M107 588.5h2M146 588.5h3M157 588.5h2M178 588.5h1M245 588.5h1M268 588.5h1M299 588.5h1M404 588.5h1M451 588.5h1M0 589.5h1M41 589.5h1M76 589.5h2M87 589.5h3M109 589.5h1M144 589.5h2M159 589.5h2M178 589.5h1M246 589.5h1M267 589.5h1M300 589.5h1M404 589.5h1M452 589.5h1M1 590.5h1M40 590.5h1M78 590.5h2M83 590.5h4M110 590.5h2M143 590.5h1M161 590.5h2M177 590.5h1M246 590.5h1M266 590.5h1M301 590.5h1M403 590.5h1M452 590.5h1M1 591.5h1M39 591.5h1M80 591.5h3M112 591.5h1M142 591.5h1M163 591.5h2M177 591.5h1M247 591.5h1M266 591.5h1M302 591.5h1M336 591.5h3M402 591.5h1M453 591.5h1M485 591.5h5M2 592.5h1M38 592.5h1M113 592.5h1M141 592.5h1M165 592.5h1M175 592.5h2M247 592.5h1M265 592.5h1M303 592.5h1M334 592.5h2M339 592.5h4M401 592.5h1M454 592.5h1M480 592.5h5M490 592.5h2M2 593.5h1M38 593.5h1M114 593.5h1M139 593.5h2M166 593.5h2M171 593.5h4M248 593.5h1M264 593.5h1M304 593.5h1M332 593.5h2M343 593.5h4M397 593.5h4M455 593.5h1M478 593.5h2M492 593.5h2M3 594.5h1M37 594.5h1M115 594.5h2M138 594.5h1M168 594.5h3M249 594.5h2M262 594.5h2M305 594.5h2M330 594.5h2M347 594.5h4M383 594.5h14M456 594.5h1M476 594.5h2M494 594.5h2M4 595.5h1M36 595.5h1M117 595.5h1M137 595.5h1M251 595.5h2M261 595.5h1M307 595.5h1M327 595.5h3M351 595.5h2M379 595.5h4M457 595.5h2M474 595.5h2M496 595.5h1M4 596.5h1M35 596.5h1M118 596.5h1M136 596.5h1M253 596.5h1M259 596.5h2M308 596.5h1M325 596.5h2M353 596.5h2M375 596.5h4M459 596.5h1M472 596.5h2M497 596.5h1M5 597.5h1M34 597.5h1M119 597.5h1M134 597.5h2M254 597.5h2M257 597.5h2M309 597.5h2M322 597.5h3M355 597.5h1M373 597.5h2M460 597.5h1M470 597.5h2M498 597.5h1M6 598.5h1M34 598.5h1M120 598.5h2M133 598.5h1M256 598.5h1M311 598.5h1M317 598.5h5M356 598.5h1M370 598.5h3M461 598.5h2M468 598.5h2M499 598.5h2M6 599.5h1M33 599.5h1M122 599.5h3M131 599.5h2M312 599.5h5M357 599.5h2M367 599.5h3M463 599.5h1M466 599.5h2M501 599.5h1M7 600.5h1M32 600.5h1M125 600.5h2M129 600.5h2M359 600.5h1M363 600.5h4M464 600.5h2M502 600.5h1M7 601.5h1M31 601.5h1M127 601.5h2M360 601.5h3M503 601.5h1M8 602.5h1M30 602.5h1M504 602.5h1M536 602.5h1M9 603.5h2M29 603.5h1M505 603.5h1M535 603.5h1M11 604.5h1M27 604.5h2M506 604.5h1M534 604.5h1M12 605.5h1M26 605.5h1M507 605.5h2M534 605.5h1M13 606.5h2M25 606.5h1M509 606.5h1M533 606.5h1M15 607.5h1M21 607.5h4M510 607.5h1M532 607.5h1M16 608.5h5M511 608.5h1M531 608.5h1M512 609.5h2M530 609.5h1M514 610.5h3M530 610.5h1M517 611.5h2M529 611.5h1M519 612.5h10" fill="none" stroke="#ff0000" stroke-width="1"/>
<path d="M183 628.5h2M179 629.5h4M185 629.5h1M175 630.5h4M186 630.5h1M-2 631.5h2M171 631.5h4M187 631.5h2M0 632.5h2M168 632.5h3M189 632.5h1M2 633.5h3M167 633.5h1M190 633.5h1M5 634.5h2M166 634.5h1M191 634.5h1M7 635.5h2M165 635.5h1M192 635.5h2M9 636.5h2M164 636.5h1M194 636.5h3M11 637.5h2M164 637.5h1M197 637.5h2M13 638.5h1M163 638.5h1M199 638.5h3M14 639.5h2M162 639.5h1M202 639.5h3M16 640.5h2M161 640.5h1M205 640.5h2M18 641.5h2M117 641.5h5M159 641.5h2M207 641.5h6M20 642.5h2M112 642.5h5M122 642.5h3M157 642.5h2M213 642.5h4M22 643.5h2M111 643.5h1M125 643.5h2M154 643.5h3M217 643.5h1M24 644.5h1M111 644.5h1M127 644.5h4M152 644.5h2M217 644.5h1M25 645.5h2M110 645.5h1M131 645.5h4M150 645.5h2M218 645.5h1M27 646.5h2M39 646.5h6M109 646.5h1M135 646.5h4M148 646.5h2M218 646.5h1M29 647.5h1M37 647.5h2M45 647.5h6M109 647.5h1M139 647.5h4M146 647.5h2M219 647.5h1M488 647.5h3M30 648.5h2M34 648.5h3M51 648.5h4M61 648.5h14M93 648.5h4M108 648.5h1M143 648.5h3M220 648.5h1M487 648.5h1M491 648.5h4M32 649.5h2M55 649.5h6M75 649.5h4M85 649.5h8M97 649.5h2M107 649.5h1M220 649.5h1M486 649.5h1M495 649.5h3M79 650.5h6M99 650.5h1M107 650.5h1M221 650.5h1M232 650.5h3M485 650.5h1M498 650.5h2M100 651.5h1M106 651.5h1M222 651.5h1M230 651.5h2M235 651.5h4M483 651.5h2M500 651.5h2M101 652.5h2M105 652.5h1M222 652.5h1M229 652.5h1M239 652.5h18M482 652.5h1M502 652.5h2M103 653.5h1M105 653.5h1M223 653.5h1M227 653.5h2M257 653.5h1M481 653.5h1M504 653.5h2M104 654.5h1M223 654.5h1M225 654.5h2M258 654.5h1M471 654.5h10M506 654.5h2M224 655.5h1M259 655.5h2M469 655.5h2M508 655.5h2M527 655.5h10M261 656.5h1M466 656.5h3M510 656.5h2M523 656.5h4M262 657.5h1M464 657.5h2M512 657.5h11M263 658.5h1M463 658.5h1M264 659.5h9M461 659.5h2M273 660.5h2M460 660.5h1M275 661.5h2M459 661.5h1M277 662.5h1M457 662.5h2M278 663.5h2M285 663.5h6M456 663.5h1M280 664.5h5M291 664.5h4M455 664.5h1M295 665.5h4M455 665.5h1M299 666.5h4M454 666.5h1M303 667.5h3M336 667.5h1M454 667.5h1M306 668.5h2M334 668.5h2M337 668.5h2M453 668.5h1M308 669.5h2M332 669.5h2M339 669.5h1M373 669.5h4M453 669.5h1M310 670.5h2M317 670.5h8M330 670.5h2M340 670.5h1M367 670.5h6M377 670.5h2M452 670.5h1M312 671.5h5M325 671.5h5M341 671.5h2M351 671.5h4M365 671.5h2M379 671.5h2M452 671.5h1M343 672.5h1M347 672.5h4M355 672.5h4M362 672.5h3M381 672.5h1M451 672.5h1M344 673.5h3M359 673.5h3M382 673.5h2M451 673.5h1M384 674.5h2M450 674.5h1M386 675.5h3M450 675.5h1M389 676.5h2M449 676.5h1M391 677.5h6M449 677.5h1M397 678.5h24M439 678.5h10M421 679.5h8M435 679.5h4M429 680.5h6" fill="none" stroke="#1e90ff" stroke-width="1"/>
<rect x="-1" y="689" width="3" height="18" fill="#c0c0c0"/>
<rect x="7" y="690" width="3" height="17" fill="#c0c0c0"/>
<rect x="15" y="692" width="3" height="15" fill="#c0c0c0"/>
<rect x="23" y="693" width="3" height="14" fill="#c0c0c0"/>
<rect x="31" y="694" width="3" height="13" fill="#c0c0c0"/>
<rect x="39" y="694" width="3" height="13" fill="#c0c0c0"/>
<rect x="47" y="695" width="3" height="12" fill="#c0c0c0"/>
<rect x="55" y="696" width="3" height="11" fill="#c0c0c0"/>
<rect x="63" y="697" width="3" height="10" fill="#c0c0c0"/>
<rect x="71" y="698" width="3" height="9" fill="#c0c0c0"/>
<rect x="79" y="699" width="3" height="8" fill="#c0c0c0"/>
<rect x="87" y="699" width="3" height="8" fill="#c0c0c0"/>
<rect x="95" y="699" width="3" height="8" fill="#c0c0c0"/>
<rect x="103" y="699" width="3" height="8" fill="#c0c0c0"/>
<rect x="111" y="704" width="3" height="3" fill="#c0c0c0"/>
<rect x="119" y="705" width="3" height="2" fill="#c0c0c0"/>
<rect x="127" y="706" width="3" height="1" fill="#c0c0c0"/>
<rect x="135" y="706" width="3" height="1" fill="#c0c0c0"/>
<rect x="143" y="706" width="3" height="1" fill="#c0c0c0"/>
<rect x="151" y="707" width="3" height="4" fill="#c0c0c0"/>
<rect x="159" y="707" width="3" height="7" fill="#c0c0c0"/>
<rect x="167" y="707" width="3" height="7" fill="#c0c0c0"/>
<rect x="175" y="707" width="3" height="5" fill="#c0c0c0"/>
<rect x="183" y="707" width="3" height="4" fill="#c0c0c0"/>
<rect x="191" y="707" width="3" height="3" fill="#c0c0c0"/>
<rect x="199" y="707" width="3" height="1" fill="#c0c0c0"/>
<rect x="207" y="706" width="3" height="1" fill="#c0c0c0"/>
<rect x="215" y="704" width="3" height="3" fill="#c0c0c0"/>
<rect x="223" y="703" width="3" height="4" fill="#c0c0c0"/>
<rect x="231" y="704" width="3" height="3" fill="#c0c0c0"/>
<rect x="239" y="706" width="3" height="1" fill="#c0c0c0"/>
<rect x="247" y="705" width="3" height="2" fill="#c0c0c0"/>
<rect x="255" y="705" width="3" height="2" fill="#c0c0c0"/>
<rect x="263" y="704" width="3" height="3" fill="#c0c0c0"/>
<rect x="271" y="703" width="3" height="4" fill="#c0c0c0"/>
<rect x="279" y="703" width="3" height="4" fill="#c0c0c0"/>
<rect x="287" y="704" width="3" height="3" fill="#c0c0c0"/>
<rect x="295" y="705" width="3" height="2" fill="#c0c0c0"/>
<rect x="303" y="705" width="3" height="2" fill="#c0c0c0"/>
<rect x="311" y="706" width="3" height="1" fill="#c0c0c0"/>
<rect x="319" y="706" width="3" height="1" fill="#c0c0c0"/>
<rect x="327" y="707" width="3" height="1" fill="#c0c0c0"/>
<rect x="335" y="707" width="3" height="2" fill="#c0c0c0"/>
<rect x="343" y="707" width="3" height="4" fill="#c0c0c0"/>
<rect x="351" y="707" width="3" height="6" fill="#c0c0c0"/>
<rect x="359" y="707" width="3" height="7" fill="#c0c0c0"/>
<rect x="367" y="707" width="3" height="7" fill="#c0c0c0"/>
<rect x="375" y="707" width="3" height="8" fill="#c0c0c0"/>
<rect x="383" y="707" width="3" height="10" fill="#c0c0c0"/>
<rect x="391" y="707" width="3" height="10" fill="#c0c0c0"/>
<rect x="399" y="707" width="3" height="9" fill="#c0c0c0"/>
<rect x="407" y="707" width="3" height="7" fill="#c0c0c0"/>
<rect x="415" y="707" width="3" height="7" fill="#c0c0c0"/>
<rect x="423" y="707" width="3" height="7" fill="#c0c0c0"/>
<rect x="431" y="707" width="3" height="6" fill="#c0c0c0"/>
<rect x="439" y="707" width="3" height="7" fill="#c0c0c0"/>
<rect x="447" y="707" width="3" height="7" fill="#c0c0c0"/>
<rect x="455" y="707" width="3" height="11" fill="#c0c0c0"/>
<rect x="463" y="707" width="3" height="14" fill="#c0c0c0"/>
<rect x="471" y="707" width="3" height="14" fill="#c0c0c0"/>
<rect x="479" y="707" width="3" height="16" fill="#c0c0c0"/>
<rect x="487" y="707" width="3" height="19" fill="#c0c0c0"/>
<rect x="495" y="707" width="3" height="21" fill="#c0c0c0"/>
<rect x="503" y="707" width="3" height="22" fill="#c0c0c0"/>
<rect x="511" y="707" width="3" height="24" fill="#c0c0c0"/>
<rect x="519" y="707" width="3" height="24" fill="#c0c0c0"/>
<rect x="527" y="707" width="3" height="24" fill="#c0c0c0"/>
<rect x="535" y="707" width="3" height="23" fill="#c0c0c0"/>
<path d="M5 689.5h24M-2 690.5h7M29 690.5h8M37 691.5h8M45 692.5h8M53 693.5h8M61 694.5h8M69 695.5h8M77 696.5h8M85 697.5h16M101 698.5h8M109 699.5h8M117 700.5h8M125 701.5h8M133 702.5h8M141 703.5h8M149 704.5h6M269 704.5h56M155 705.5h4M253 705.5h16M325 705.5h16M159 706.5h6M237 706.5h16M341 706.5h8M165 707.5h8M229 707.5h8M349 707.5h8M173 708.5h8M221 708.5h8M357 708.5h8M181 709.5h8M213 709.5h8M365 709.5h8M189 710.5h24M373 710.5h8M381 711.5h8M389 712.5h8M397 713.5h8M405 714.5h56M461 715.5h14M475 716.5h4M479 717.5h6M485 718.5h8M493 719.5h6M499 720.5h4M503 721.5h6M509 722.5h6M515 723.5h4M519 724.5h6M525 725.5h6M531 726.5h4M535 727.5h2" fill="none" stroke="#ff0000" stroke-width="1"/>
</g>
<g shape-rendering="auto" text-rendering="geometricPrecision">
<rect x="695" y="37" width="2" height="1" fill="#fff" />
<text x="700" y="41" font-size="9.8" fill="#fff" stroke="#fff" stroke-width="0.15" text-anchor="start" textLength="33" lengthAdjust="spacingAndGlyphs">4032.25</text>
<rect x="695" y="70" width="2" height="1" fill="#fff" />
<text x="700" y="74" font-size="9.8" fill="#fff" stroke="#fff" stroke-width="0.15" text-anchor="start" textLength="33" lengthAdjust="spacingAndGlyphs">4022.75</text>
<rect x="695" y="103" width="2" height="1" fill="#fff" />
<text x="700" y="107" font-size="9.8" fill="#fff" stroke="#fff" stroke-width="0.15" text-anchor="start" textLength="33" lengthAdjust="spacingAndGlyphs">4013.00</text>
<rect x="695" y="136" width="2" height="1" fill="#fff" />
<text x="700" y="140" font-size="9.8" fill="#fff" stroke="#fff" stroke-width="0.15" text-anchor="start" textLength="33" lengthAdjust="spacingAndGlyphs">4003.50</text>
<rect x="695" y="169" width="2" height="1" fill="#fff" />
<text x="700" y="173" font-size="9.8" fill="#fff" stroke="#fff" stroke-width="0.15" text-anchor="start" textLength="33" lengthAdjust="spacingAndGlyphs">3993.75</text>
<rect x="695" y="202" width="2" height="1" fill="#fff" />
<text x="700" y="206" font-size="9.8" fill="#fff" stroke="#fff" stroke-width="0.15" text-anchor="start" textLength="33" lengthAdjust="spacingAndGlyphs">3984.25</text>
<rect x="695" y="235" width="2" height="1" fill="#fff" />
<text x="700" y="239" font-size="9.8" fill="#fff" stroke="#fff" stroke-width="0.15" text-anchor="start" textLength="33" lengthAdjust="spacingAndGlyphs">3974.75</text>
<rect x="695" y="268" width="2" height="1" fill="#fff" />
<text x="700" y="272" font-size="9.8" fill="#fff" stroke="#fff" stroke-width="0.15" text-anchor="start" textLength="33" lengthAdjust="spacingAndGlyphs">3965.00</text>
<rect x="695" y="301" width="2" height="1" fill="#fff" />
<text x="700" y="305" font-size="9.8" fill="#fff" stroke="#fff" stroke-width="0.15" text-anchor="start" textLength="33" lengthAdjust="spacingAndGlyphs">3955.50</text>
<rect x="695" y="334" width="2" height="1" fill="#fff" />
<text x="700" y="338" font-size="9.8" fill="#fff" stroke="#fff" stroke-width="0.15" text-anchor="start" textLength="33" lengthAdjust="spacingAndGlyphs">3946.00</text>
<rect x="695" y="367" width="2" height="1" fill="#fff" />
<text x="700" y="371" font-size="9.8" fill="#fff" stroke="#fff" stroke-width="0.15" text-anchor="start" textLength="33" lengthAdjust="spacingAndGlyphs">3936.25</text>
<rect x="695" y="400" width="2" height="1" fill="#fff" />
<text x="700" y="404" font-size="9.8" fill="#fff" stroke="#fff" stroke-width="0.15" text-anchor="start" textLength="33" lengthAdjust="spacingAndGlyphs">3926.75</text>
<rect x="696" y="321" width="41" height="11" fill="#fff"/>
<text x="700" y="329.9" font-size="9.8" fill="#000" stroke="#000" stroke-width="0.15" text-anchor="start" textLength="33" lengthAdjust="spacingAndGlyphs">3948.14</text>
<text x="697.6" y="416.1" font-size="9.8" fill="#fff" stroke="#fff" stroke-width="0.15" text-anchor="start" textLength="38.0" lengthAdjust="spacingAndGlyphs">169.1187</text>
<text x="697.6" y="421.1" font-size="9.8" fill="#fff" stroke="#fff" stroke-width="0.15" text-anchor="start" textLength="15.0" lengthAdjust="spacingAndGlyphs">100</text>
<text x="697.6" y="436.2" font-size="9.8" fill="#fff" stroke="#fff" stroke-width="0.15" text-anchor="start" textLength="18.0" lengthAdjust="spacingAndGlyphs">0.00</text>
<text x="697.6" y="451.9" font-size="9.8" fill="#fff" stroke="#fff" stroke-width="0.15" text-anchor="start" textLength="18.5" lengthAdjust="spacingAndGlyphs">-100</text>
<text x="697.6" y="475.8" font-size="9.8" fill="#fff" stroke="#fff" stroke-width="0.15" text-anchor="start" textLength="41.5" lengthAdjust="spacingAndGlyphs">-300.4173</text>
<text x="697.6" y="491.9" font-size="9.8" fill="#fff" stroke="#fff" stroke-width="0.15" text-anchor="start" textLength="15.0" lengthAdjust="spacingAndGlyphs">100</text>
<text x="697.6" y="506.1" font-size="9.8" fill="#fff" stroke="#fff" stroke-width="0.15" text-anchor="start" textLength="10.0" lengthAdjust="spacingAndGlyphs">70</text>
<text x="697.6" y="532.1" font-size="9.8" fill="#fff" stroke="#fff" stroke-width="0.15" text-anchor="start" textLength="10.0" lengthAdjust="spacingAndGlyphs">30</text>
<text x="697.6" y="545.1" font-size="9.8" fill="#fff" stroke="#fff" stroke-width="0.15" text-anchor="start" textLength="5.0" lengthAdjust="spacingAndGlyphs">0</text>
<text x="697.6" y="560.8" font-size="9.8" fill="#fff" stroke="#fff" stroke-width="0.15" text-anchor="start" textLength="15.0" lengthAdjust="spacingAndGlyphs">100</text>
<text x="697.6" y="569.1" font-size="9.8" fill="#fff" stroke="#fff" stroke-width="0.15" text-anchor="start" textLength="10.0" lengthAdjust="spacingAndGlyphs">80</text>
<text x="697.6" y="610.8" font-size="9.8" fill="#fff" stroke="#fff" stroke-width="0.15" text-anchor="start" textLength="10.0" lengthAdjust="spacingAndGlyphs">20</text>
<text x="697.6" y="618.9" font-size="9.8" fill="#fff" stroke="#fff" stroke-width="0.15" text-anchor="start" textLength="5.0" lengthAdjust="spacingAndGlyphs">0</text>
<text x="697.6" y="635.0" font-size="9.8" fill="#fff" stroke="#fff" stroke-width="0.15" text-anchor="start" textLength="33.0" lengthAdjust="spacingAndGlyphs">21.9548</text>
<text x="697.6" y="680.1" font-size="9.8" fill="#fff" stroke="#fff" stroke-width="0.15" text-anchor="start" textLength="33.0" lengthAdjust="spacingAndGlyphs">13.8352</text>
<text x="697.6" y="696.3" font-size="9.8" fill="#fff" stroke="#fff" stroke-width="0.15" text-anchor="start" textLength="28.0" lengthAdjust="spacingAndGlyphs">15.116</text>
<text x="697.6" y="711.1" font-size="9.8" fill="#fff" stroke="#fff" stroke-width="0.15" text-anchor="start" textLength="18.0" lengthAdjust="spacingAndGlyphs">0.00</text>
<text x="697.6" y="729.8" font-size="9.8" fill="#fff" stroke="#fff" stroke-width="0.15" text-anchor="start" textLength="31.5" lengthAdjust="spacingAndGlyphs">-18.174</text>
<rect x="695" y="407" width="1" height="1" fill="#fff" />
<rect x="695" y="432" width="1" height="1" fill="#fff" />
<rect x="695" y="478" width="1" height="1" fill="#fff" />
<rect x="695" y="483" width="1" height="1" fill="#fff" />
<rect x="695" y="547" width="1" height="1" fill="#fff" />
<rect x="695" y="552" width="1" height="1" fill="#fff" />
<rect x="695" y="621" width="1" height="1" fill="#fff" />
<rect x="695" y="626" width="1" height="1" fill="#fff" />
<rect x="695" y="682" width="1" height="1" fill="#fff" />
<rect x="695" y="687" width="1" height="1" fill="#fff" />
<rect x="695" y="707" width="1" height="1" fill="#fff" />
<rect x="695" y="732" width="1" height="1" fill="#fff" />
<path d="M3 10h7l-3.5 4z" fill="#fff"/>
<text x="14.8" y="15" font-size="9.8" fill="#fff" stroke="#fff" stroke-width="0.15" text-anchor="start" textLength="49.4" lengthAdjust="spacingAndGlyphs">GOLD#,H1</text>
<text x="177.7" y="15" font-size="9.8" fill="#fff" stroke="#fff" stroke-width="0.15" text-anchor="start" textLength="33.0" lengthAdjust="spacingAndGlyphs">3948.14</text>
<text x="141.7" y="15" font-size="9.8" fill="#fff" stroke="#fff" stroke-width="0.15" text-anchor="start" textLength="33.0" lengthAdjust="spacingAndGlyphs">3937.11</text>
<text x="105.7" y="15" font-size="9.8" fill="#fff" stroke="#fff" stroke-width="0.15" text-anchor="start" textLength="33.0" lengthAdjust="spacingAndGlyphs">3949.44</text>
<text x="69.7" y="15" font-size="9.8" fill="#fff" stroke="#fff" stroke-width="0.15" text-anchor="start" textLength="33.0" lengthAdjust="spacingAndGlyphs">3939.94</text>
<text x="3.9" y="418" font-size="9.8" fill="#fff" stroke="#fff" stroke-width="0.15" text-anchor="start" textLength="34.9" lengthAdjust="spacingAndGlyphs">CCI(14)</text>
<text x="40.3" y="418" font-size="9.8" fill="#fff" stroke="#fff" stroke-width="0.15" text-anchor="start" textLength="36.5" lengthAdjust="spacingAndGlyphs">-40.8343</text>
<text x="3.9" y="494" font-size="9.8" fill="#fff" stroke="#fff" stroke-width="0.15" text-anchor="start" textLength="32.3" lengthAdjust="spacingAndGlyphs">RSI(14)</text>
<text x="39.1" y="494" font-size="9.8" fill="#fff" stroke="#fff" stroke-width="0.15" text-anchor="start" textLength="33.0" lengthAdjust="spacingAndGlyphs">39.9248</text>
<text x="3.9" y="563" font-size="9.8" fill="#fff" stroke="#fff" stroke-width="0.15" text-anchor="start" textLength="42.1" lengthAdjust="spacingAndGlyphs">Sto(5,3,3)</text>
<text x="84.5" y="563" font-size="9.8" fill="#fff" stroke="#fff" stroke-width="0.15" text-anchor="start" textLength="33.0" lengthAdjust="spacingAndGlyphs">28.3664</text>
<text x="48.5" y="563" font-size="9.8" fill="#fff" stroke="#fff" stroke-width="0.15" text-anchor="start" textLength="33.0" lengthAdjust="spacingAndGlyphs">53.9313</text>
<text x="3.9" y="637" font-size="9.8" fill="#fff" stroke="#fff" stroke-width="0.15" text-anchor="start" textLength="35.9" lengthAdjust="spacingAndGlyphs">ATR(14)</text>
<text x="42.5" y="637" font-size="9.8" fill="#fff" stroke="#fff" stroke-width="0.15" text-anchor="start" textLength="33.0" lengthAdjust="spacingAndGlyphs">17.7529</text>
<text x="3.9" y="698" font-size="9.8" fill="#fff" stroke="#fff" stroke-width="0.15" text-anchor="start" textLength="66.3" lengthAdjust="spacingAndGlyphs">MACD(12,26,9)</text>
<text x="107.0" y="698" font-size="9.8" fill="#fff" stroke="#fff" stroke-width="0.15" text-anchor="start" textLength="31.5" lengthAdjust="spacingAndGlyphs">-13.928</text>
<text x="72.5" y="698" font-size="9.8" fill="#fff" stroke="#fff" stroke-width="0.15" text-anchor="start" textLength="31.5" lengthAdjust="spacingAndGlyphs">-15.423</text>
<rect x="0" y="734" width="1" height="3" fill="#fff"/>
<text x="-2.3" y="746" font-size="9.8" fill="#fff" stroke="#fff" stroke-width="0.15" text-anchor="start" textLength="52" lengthAdjust="spacingAndGlyphs">31 Oct 2025</text>
<rect x="64" y="734" width="1" height="3" fill="#fff"/>
<text x="62.7" y="746" font-size="9.8" fill="#fff" stroke="#fff" stroke-width="0.15" text-anchor="start" textLength="54.1" lengthAdjust="spacingAndGlyphs">31 Oct 12:00</text>
<rect x="128" y="734" width="1" height="3" fill="#fff"/>
<text x="126.7" y="746" font-size="9.8" fill="#fff" stroke="#fff" stroke-width="0.15" text-anchor="start" textLength="54.1" lengthAdjust="spacingAndGlyphs">31 Oct 20:00</text>
<rect x="192" y="734" width="1" height="3" fill="#fff"/>
<text x="190.7" y="746" font-size="9.8" fill="#fff" stroke="#fff" stroke-width="0.15" text-anchor="start" textLength="51.5" lengthAdjust="spacingAndGlyphs">3 Nov 06:00</text>
<rect x="256" y="734" width="1" height="3" fill="#fff"/>
<text x="254.7" y="746" font-size="9.8" fill="#fff" stroke="#fff" stroke-width="0.15" text-anchor="start" textLength="51.5" lengthAdjust="spacingAndGlyphs">3 Nov 14:00</text>
<rect x="320" y="734" width="1" height="3" fill="#fff"/>
<text x="318.7" y="746" font-size="9.8" fill="#fff" stroke="#fff" stroke-width="0.15" text-anchor="start" textLength="51.5" lengthAdjust="spacingAndGlyphs">3 Nov 22:00</text>
<rect x="384" y="734" width="1" height="3" fill="#fff"/>
<text x="382.7" y="746" font-size="9.8" fill="#fff" stroke="#fff" stroke-width="0.15" text-anchor="start" textLength="51.5" lengthAdjust="spacingAndGlyphs">4 Nov 07:00</text>
<rect x="448" y="734" width="1" height="3" fill="#fff"/>
<text x="446.7" y="746" font-size="9.8" fill="#fff" stroke="#fff" stroke-width="0.15" text-anchor="start" textLength="51.5" lengthAdjust="spacingAndGlyphs">4 Nov 15:00</text>
<rect x="512" y="734" width="1" height="3" fill="#fff"/>
<text x="510.7" y="746" font-size="9.8" fill="#fff" stroke="#fff" stroke-width="0.15" text-anchor="start" textLength="51.5" lengthAdjust="spacingAndGlyphs">4 Nov 23:00</text>
</g>
</svg>
</body></html>
